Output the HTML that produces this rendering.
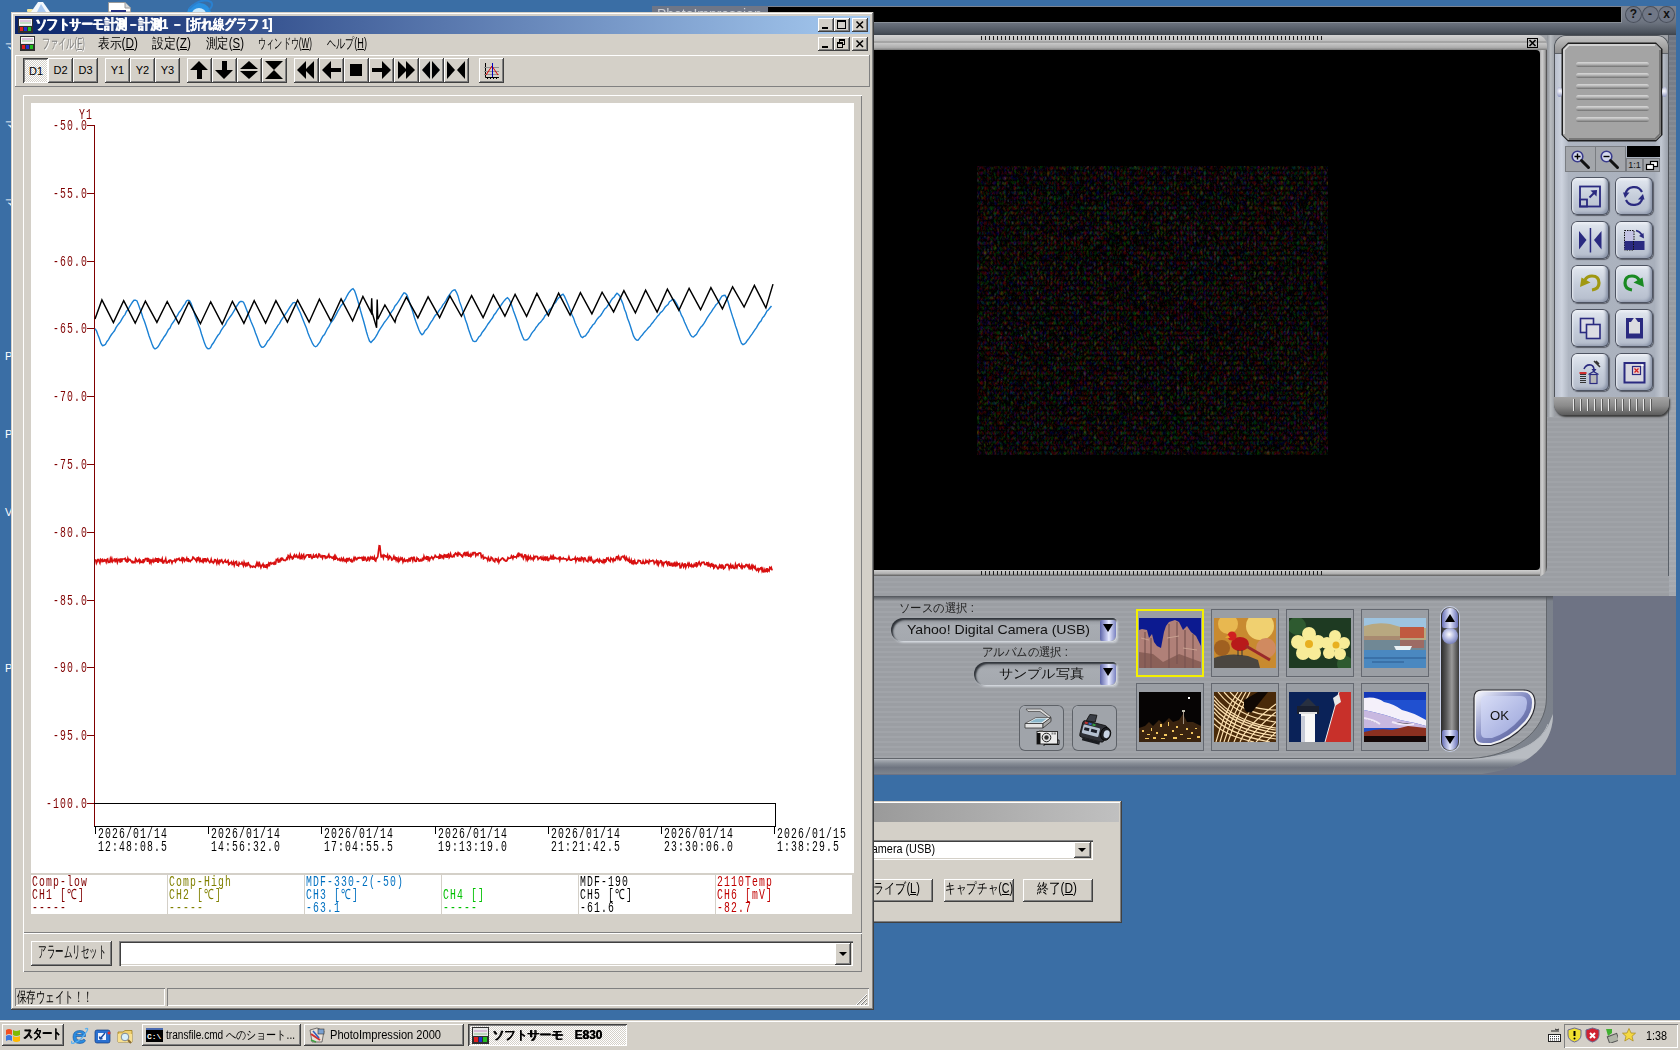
<!DOCTYPE html><html><head><meta charset="utf-8"><style>
*{margin:0;padding:0;box-sizing:border-box}
html,body{width:1680px;height:1050px;overflow:hidden;background:#3a6ea5;font-family:"Liberation Sans",sans-serif;font-size:12px;color:#000;position:relative}
.a{position:absolute}
.raised{background:#d4d0c8;box-shadow:inset -1px -1px #404040,inset 1px 1px #fff,inset -2px -2px #808080}
.btn{background:#d4d0c8;box-shadow:inset -1px -1px #404040,inset 1px 1px #fff,inset -2px -2px #808080}
.sunk{box-shadow:inset 1px 1px #808080,inset -1px -1px #fff,inset 2px 2px #404040,inset -2px -2px #d4d0c8}
.thinr{box-shadow:inset -1px -1px #808080,inset 1px 1px #fff}
.thins{box-shadow:inset 1px 1px #808080,inset -1px -1px #fff}
.mono{font-family:"Liberation Mono",monospace}
.t{white-space:nowrap;line-height:1}
u{text-decoration:underline;text-underline-offset:1px}
</style></head><body>
<div class="a t" style="left:5px;top:41px;color:#fff;font-size:11px">マ</div>
<div class="a t" style="left:5px;top:119px;color:#fff;font-size:11px">マ</div>
<div class="a t" style="left:5px;top:197px;color:#fff;font-size:11px">マ</div>
<div class="a t" style="left:5px;top:351px;color:#fff;font-size:11px">P</div>
<div class="a t" style="left:5px;top:429px;color:#fff;font-size:11px">P</div>
<div class="a t" style="left:5px;top:507px;color:#fff;font-size:11px">V</div>
<div class="a t" style="left:5px;top:663px;color:#fff;font-size:11px">P</div>
<svg class="a" style="left:24px;top:0" width="30" height="12"><rect x="3" y="9" width="6" height="3" rx="1" fill="#f4e8a0"/><polygon points="14,2 19,2 26,12 7,12" fill="#f4f8fc"/><polygon points="17,4 22,12 13,12" fill="#a8c8f0"/></svg>
<svg class="a" style="left:106px;top:0" width="28" height="12"><path d="M2.5 2.5 H19 L24.5 8 V12 H2.5Z" fill="#fff" stroke="#9a9a9a"/><path d="M19 2.5 V8 H24.5" fill="#d8d8d8" stroke="#9a9a9a"/><rect x="5" y="10" width="15" height="2" fill="#203080"/></svg>
<svg class="a" style="left:185px;top:0" width="30" height="12"><ellipse cx="14" cy="14" rx="12" ry="11" fill="#2a90e0"/><ellipse cx="14" cy="14" rx="7" ry="6" fill="#c8e8fc"/><path d="M4 9 Q16 -3 26 2 Q29 5 24 10" stroke="#2a80d0" stroke-width="2" fill="none"/></svg>
<div class="a" style="left:652px;top:6px;width:116px;height:8px;background:#6e7687;overflow:hidden"><div class="t" style="position:absolute;left:5px;top:0px;color:#c8ccd4;font-size:15px;transform:scaleX(.93);transform-origin:0 0">PhotoImpression</div></div>
<div class="a" style="left:768px;top:6px;width:908px;height:590px;background:repeating-linear-gradient(#a0a3a8 0 2px,#9b9ea3 2px 5px)"></div>
<div class="a" style="left:768px;top:6px;width:908px;height:29px;background:linear-gradient(#7e8490,#767c88 40%,#6a717d 60%,#4c535d 90%,#3e444c)"></div>
<div class="a" style="left:768px;top:7px;width:853px;height:15px;background:#000;box-shadow:1px 1px #8a9098"></div>
<div class="a t" style="left:1625.0px;top:6px;width:17px;height:17px;border-radius:50%;background:#707786;box-shadow:inset 0 0 0 1px #4a505c;color:#111;font-size:12px;font-weight:bold;text-align:center;line-height:16px">?</div>
<div class="a t" style="left:1641.5px;top:6px;width:17px;height:17px;border-radius:50%;background:#707786;box-shadow:inset 0 0 0 1px #4a505c;color:#111;font-size:12px;font-weight:bold;text-align:center;line-height:16px">-</div>
<div class="a t" style="left:1658.0px;top:6px;width:17px;height:17px;border-radius:50%;background:#707786;box-shadow:inset 0 0 0 1px #4a505c;color:#111;font-size:12px;font-weight:bold;text-align:center;line-height:16px">x</div>
<div class="a" style="left:1668px;top:35px;width:8px;height:561px;background:linear-gradient(90deg,#5a6068 0 1px,transparent 1px),repeating-linear-gradient(rgba(255,255,255,.06) 0 2px,transparent 2px 5px),linear-gradient(#6e7480,#8a9098 25%,#9ea2a8 60%,#a4a8ae)"></div>
<div class="a" style="left:768px;top:35px;width:779px;height:542px;border-radius:0 10px 10px 0;background:linear-gradient(#d4d4d4,#bcbcbc 40%,#8a8a8a 47%,#c8c8c8 54%,#ababab 85%,#7a7a7a) left top/100% 15px no-repeat,linear-gradient(90deg,#a8a8a8,#d0d0d0 30%,#a0a0a0 75%,#3a3a3a) right top/7px 100% no-repeat,linear-gradient(#d0d0d0,#b0b0b0 50%,#3a3a3a) left bottom/100% 7px no-repeat,#b0b0b0"></div>
<div class="a" style="left:981px;top:36px;width:343px;height:4px;background:repeating-linear-gradient(90deg,#1a1a1a 0 1px,transparent 1px 4px)"></div>
<div class="a" style="left:981px;top:571px;width:343px;height:4px;background:repeating-linear-gradient(90deg,#1a1a1a 0 1px,transparent 1px 4px)"></div>
<svg class="a" style="left:1527px;top:38px" width="11" height="10"><rect x="0.5" y="0.5" width="10" height="9" fill="none" stroke="#000"/><path d="M2.5 2 L8.5 8 M8.5 2 L2.5 8" stroke="#000" stroke-width="1.6"/></svg>
<div class="a" style="left:768px;top:50px;width:772px;height:520px;background:#000;border-radius:0 4px 4px 0"></div>
<svg class="a" style="left:977px;top:166px" width="351" height="289"><filter id="nz" x="0" y="0" width="100%" height="100%" color-interpolation-filters="sRGB"><feTurbulence type="turbulence" baseFrequency="0.3 0.2" numOctaves="3" seed="11"/><feColorMatrix values="0.46 0 0 0 -0.1  0 0.42 0 0 -0.1  0 0 0.42 0 -0.1  0 0 0 0 1"/></filter><rect width="351" height="289" fill="#000"/><rect width="351" height="289" filter="url(#nz)"/></svg>
<div class="a" style="left:1547px;top:35px;width:8px;height:382px;background:linear-gradient(90deg,#8e9298,#b8bcc0 45%,#9a9ea4)"></div>
<div class="a" style="left:1554px;top:35px;width:115px;height:380px;background:#9da2a8;border-radius:12px 12px 11px 11px;box-shadow:inset 0 0 0 1px #50545a"></div>
<div class="a" style="left:1555px;top:45px;width:113px;height:352px;background:linear-gradient(90deg,#b8bfcc,#cdd3de 6%,#aeb5c1 12%,#a9b0bc 88%,#c0c6d0 94%,#9aa0aa)"></div>
<div class="a" style="left:1555px;top:36px;width:113px;height:18px;border-radius:11px 11px 0 0;background:linear-gradient(#c4c4c4,#a8a8a8 50%,#8c8c8c);box-shadow:inset 0 -1px #60646a"></div>
<svg class="a" style="left:1561px;top:42px" width="103" height="102"><polygon points="7,0.5 95,0.5 101.5,7 101.5,93 95,99.5 7,99.5 0.5,93 0.5,7" fill="#1e1e1e"/><polygon points="7,2 95,2 100,7 100,93 95,98 7,98 2,93 2,7" fill="#a4a4a4"/><path d="M3 92 V8 L8 3 H94" fill="none" stroke="#e0e0e0" stroke-width="1.5"/><path d="M99 8 V92 L94 97 H8" fill="none" stroke="#6a6a6a" stroke-width="1.5"/></svg>
<div class="a" style="left:1557px;top:87px;width:5px;height:10px;border-radius:50%;background:radial-gradient(circle at 60% 40%,#fff,#8088b8)"></div>
<div class="a" style="left:1662px;top:87px;width:5px;height:10px;border-radius:50%;background:radial-gradient(circle at 40% 40%,#fff,#8088b8)"></div>
<div class="a" style="left:1576px;top:62px;width:73px;height:5px;border-radius:3px;background:linear-gradient(#d8d8d8,#bcbcbc 40%,#707070)"></div>
<div class="a" style="left:1576px;top:73px;width:73px;height:5px;border-radius:3px;background:linear-gradient(#d8d8d8,#bcbcbc 40%,#707070)"></div>
<div class="a" style="left:1576px;top:84px;width:73px;height:5px;border-radius:3px;background:linear-gradient(#d8d8d8,#bcbcbc 40%,#707070)"></div>
<div class="a" style="left:1576px;top:95px;width:73px;height:5px;border-radius:3px;background:linear-gradient(#d8d8d8,#bcbcbc 40%,#707070)"></div>
<div class="a" style="left:1576px;top:106px;width:73px;height:5px;border-radius:3px;background:linear-gradient(#d8d8d8,#bcbcbc 40%,#707070)"></div>
<div class="a" style="left:1576px;top:117px;width:73px;height:5px;border-radius:3px;background:linear-gradient(#d8d8d8,#bcbcbc 40%,#707070)"></div>
<div class="a" style="left:1565px;top:146px;width:61px;height:26px;background:#a3a6ab;box-shadow:inset 0 0 0 1px #7a7d82"></div>
<div class="a" style="left:1595px;top:146px;width:1px;height:26px;background:#7a7d82"></div>
<svg class="a" style="left:1571px;top:150px" width="22" height="22"><circle cx="6.5" cy="6.5" r="5.3" fill="#d4d8ec" stroke="#3a3c8c" stroke-width="1.6"/><path d="M3.5 6.5h6M6.5 3.5v6" stroke="#000" stroke-width="1.4"/><path d="M10.5 10.5 L17.5 17.5" stroke="#111" stroke-width="3" stroke-linecap="round"/></svg>
<svg class="a" style="left:1600px;top:150px" width="22" height="22"><circle cx="6.5" cy="6.5" r="5.3" fill="#d4d8ec" stroke="#3a3c8c" stroke-width="1.6"/><path d="M3.5 6.5h6" stroke="#000" stroke-width="1.4"/><path d="M10.5 10.5 L17.5 17.5" stroke="#111" stroke-width="3" stroke-linecap="round"/></svg>
<div class="a" style="left:1627px;top:146px;width:33px;height:11px;background:#000"></div>
<div class="a t" style="left:1626px;top:158px;width:17px;height:14px;background:#a3a6ab;box-shadow:inset 0 0 0 1px #7a7d82;font-size:9px;text-align:center;line-height:14px;color:#111">1:1</div>
<div class="a" style="left:1643px;top:158px;width:17px;height:14px;background:#a3a6ab;box-shadow:inset 0 0 0 1px #7a7d82"></div>
<svg class="a" style="left:1645px;top:160px" width="14" height="11"><rect x="5.5" y="1.5" width="7" height="5" fill="#fff" stroke="#000" stroke-width="1.2"/><rect x="1.5" y="4.5" width="7" height="5" fill="#fff" stroke="#000" stroke-width="1.2"/></svg>
<div class="a" style="left:1571px;top:177px;width:38px;height:38px;border-radius:6px;background:linear-gradient(#f4f6fa,#dde3ec 12%,#c6cedb 50%,#b4bccb);box-shadow:inset 0 0 0 1px #4e5462,inset 2px 0 2px #e8ecf2,inset -3px -2px 3px #8a94a8,1px 1px 1px #5a5e68"></div>
<svg class="a" style="left:1571px;top:177px" width="38" height="38" viewBox="0 0 38 38"><rect x="9" y="9.5" width="20" height="20" fill="none" stroke="#2a2a80" stroke-width="1.8"/><rect x="9" y="22.5" width="7" height="7" fill="none" stroke="#2a2a80" stroke-width="1.8"/><path d="M18.5 20.5 L23.5 15.5" stroke="#2a2a80" stroke-width="2"/><polygon points="26,13 25.5,19.5 19.5,13.5" fill="#2a2a80"/></svg>
<div class="a" style="left:1615px;top:177px;width:38px;height:38px;border-radius:6px;background:linear-gradient(#f4f6fa,#dde3ec 12%,#c6cedb 50%,#b4bccb);box-shadow:inset 0 0 0 1px #4e5462,inset 2px 0 2px #e8ecf2,inset -3px -2px 3px #8a94a8,1px 1px 1px #5a5e68"></div>
<svg class="a" style="left:1615px;top:177px" width="38" height="38" viewBox="0 0 38 38"><path d="M10.5 17 A8.8 8.8 0 0 1 27 15" fill="none" stroke="#2a2a80" stroke-width="2.2"/><polygon points="8,15.5 14.5,15.5 10,21" fill="#2a2a80"/><path d="M27.5 21 A8.8 8.8 0 0 1 11 23" fill="none" stroke="#2a2a80" stroke-width="2.2"/><polygon points="29.5,22.5 23,22.5 28,17" fill="#2a2a80"/></svg>
<div class="a" style="left:1571px;top:221px;width:38px;height:38px;border-radius:6px;background:linear-gradient(#f4f6fa,#dde3ec 12%,#c6cedb 50%,#b4bccb);box-shadow:inset 0 0 0 1px #4e5462,inset 2px 0 2px #e8ecf2,inset -3px -2px 3px #8a94a8,1px 1px 1px #5a5e68"></div>
<svg class="a" style="left:1571px;top:221px" width="38" height="38" viewBox="0 0 38 38"><polygon points="8,10 15.5,19 8,28.5" fill="#2a2a80"/><polygon points="30.5,10 23,19 30.5,28.5" fill="#2a2a80"/><rect x="18.7" y="7" width="1.5" height="24.5" fill="#2a2a80"/></svg>
<div class="a" style="left:1615px;top:221px;width:38px;height:38px;border-radius:6px;background:linear-gradient(#f4f6fa,#dde3ec 12%,#c6cedb 50%,#b4bccb);box-shadow:inset 0 0 0 1px #4e5462,inset 2px 0 2px #e8ecf2,inset -3px -2px 3px #8a94a8,1px 1px 1px #5a5e68"></div>
<svg class="a" style="left:1615px;top:221px" width="38" height="38" viewBox="0 0 38 38"><rect x="9.5" y="9.5" width="9.5" height="19.5" fill="#c4c4e4" stroke="#111" stroke-width="1" stroke-dasharray="1.5 1"/><rect x="9.5" y="20" width="20" height="9" fill="#2a2a80"/><path d="M18.5 20 V29" stroke="#111" stroke-dasharray="1.5 1"/><path d="M21 9.5 Q25 10.5 27 14" fill="none" stroke="#2a2a80" stroke-width="1.8"/><polygon points="29,17.5 24,15 28.5,12" fill="#2a2a80"/></svg>
<div class="a" style="left:1571px;top:265px;width:38px;height:38px;border-radius:6px;background:linear-gradient(#f4f6fa,#dde3ec 12%,#c6cedb 50%,#b4bccb);box-shadow:inset 0 0 0 1px #4e5462,inset 2px 0 2px #e8ecf2,inset -3px -2px 3px #8a94a8,1px 1px 1px #5a5e68"></div>
<svg class="a" style="left:1571px;top:265px" width="38" height="38" viewBox="0 0 38 38"><path d="M21 25 Q28 24 28 18 Q28 11 21 11 Q16 11 14 15" fill="none" stroke="#a09812" stroke-width="3.2"/><polygon points="9,22 10.5,12.5 19.5,17.5" fill="#a09812"/></svg>
<div class="a" style="left:1615px;top:265px;width:38px;height:38px;border-radius:6px;background:linear-gradient(#f4f6fa,#dde3ec 12%,#c6cedb 50%,#b4bccb);box-shadow:inset 0 0 0 1px #4e5462,inset 2px 0 2px #e8ecf2,inset -3px -2px 3px #8a94a8,1px 1px 1px #5a5e68"></div>
<svg class="a" style="left:1615px;top:265px" width="38" height="38" viewBox="0 0 38 38"><path d="M17 25 Q10 24 10 18 Q10 11 17 11 Q22 11 24 15" fill="none" stroke="#1a8a22" stroke-width="3.2"/><polygon points="29,22 27.5,12.5 18.5,17.5" fill="#1a8a22"/></svg>
<div class="a" style="left:1571px;top:309px;width:38px;height:38px;border-radius:6px;background:linear-gradient(#f4f6fa,#dde3ec 12%,#c6cedb 50%,#b4bccb);box-shadow:inset 0 0 0 1px #4e5462,inset 2px 0 2px #e8ecf2,inset -3px -2px 3px #8a94a8,1px 1px 1px #5a5e68"></div>
<svg class="a" style="left:1571px;top:309px" width="38" height="38" viewBox="0 0 38 38"><rect x="9.5" y="9.5" width="13" height="14" fill="#dcdce4" stroke="#2a2a80" stroke-width="1.6"/><rect x="15.5" y="15.5" width="13.5" height="14" fill="#dcdce4" stroke="#2a2a80" stroke-width="1.6"/></svg>
<div class="a" style="left:1615px;top:309px;width:38px;height:38px;border-radius:6px;background:linear-gradient(#f4f6fa,#dde3ec 12%,#c6cedb 50%,#b4bccb);box-shadow:inset 0 0 0 1px #4e5462,inset 2px 0 2px #e8ecf2,inset -3px -2px 3px #8a94a8,1px 1px 1px #5a5e68"></div>
<svg class="a" style="left:1615px;top:309px" width="38" height="38" viewBox="0 0 38 38"><rect x="11" y="9" width="17" height="20.5" fill="#2a2a80"/><rect x="14" y="13" width="11" height="11.5" fill="#dcdce0"/><polygon points="16,13 19.5,8 23,13" fill="#dcdce0"/></svg>
<div class="a" style="left:1571px;top:353px;width:38px;height:38px;border-radius:6px;background:linear-gradient(#f4f6fa,#dde3ec 12%,#c6cedb 50%,#b4bccb);box-shadow:inset 0 0 0 1px #4e5462,inset 2px 0 2px #e8ecf2,inset -3px -2px 3px #8a94a8,1px 1px 1px #5a5e68"></div>
<svg class="a" style="left:1571px;top:353px" width="38" height="38" viewBox="0 0 38 38"><g stroke="#333" stroke-width="1"><path d="M9 21.5 H15 M9 23.5 H15 M9 25.5 H15 M9 27.5 H15 M9 29.5 H15"/></g><rect x="8.5" y="19" width="7" height="2" fill="#d03030"/><path d="M13 16 Q15 11 20 12 Q23 13 23 17" fill="none" stroke="#2a2a80" stroke-width="1.6"/><polygon points="20.5,16 25.5,16 23,19.5" fill="#2a2a80"/><path d="M17.5 21.5 L22.5 18.5 L27.5 21.5" fill="none" stroke="#2a2a80" stroke-width="1.2"/><rect x="19" y="21.5" width="7" height="9" fill="#b8b8b8" stroke="#2a2a80" stroke-width="1.2"/><path d="M23 8 L29 14 M25 8 L28 11" stroke="#333" stroke-width="1.5"/></svg>
<div class="a" style="left:1615px;top:353px;width:38px;height:38px;border-radius:6px;background:linear-gradient(#f4f6fa,#dde3ec 12%,#c6cedb 50%,#b4bccb);box-shadow:inset 0 0 0 1px #4e5462,inset 2px 0 2px #e8ecf2,inset -3px -2px 3px #8a94a8,1px 1px 1px #5a5e68"></div>
<svg class="a" style="left:1615px;top:353px" width="38" height="38" viewBox="0 0 38 38"><rect x="9.5" y="10" width="20" height="19.5" fill="#d8d8e0" stroke="#2a2a80" stroke-width="2"/><rect x="26" y="11.5" width="2.5" height="1.5" fill="#fff"/><rect x="17.5" y="13.5" width="8" height="8" fill="#f0d0d0" stroke="#2a2a80" stroke-width="1.2"/><path d="M19.5 15.5 L23.5 19.5 M23.5 15.5 L19.5 19.5" stroke="#d02020" stroke-width="1.3"/></svg>
<div class="a" style="left:1554px;top:397px;width:115px;height:18px;border-radius:0 0 11px 11px;background:linear-gradient(#a4a4a4,#8a8a8a 50%,#5c5c5c);box-shadow:1px 2px 2px #3a3a3a"></div>
<div class="a" style="left:1573px;top:399px;width:82px;height:12px;background:repeating-linear-gradient(90deg,#e8e8e8 0 1px,#5a5a5a 1px 2px,transparent 2px 7px)"></div>
<div class="a" style="left:768px;top:576px;width:901px;height:20px;background:repeating-linear-gradient(#a0a3a8 0 2px,#9b9ea3 2px 5px)"></div>
<svg class="a" style="left:768px;top:596px" width="908" height="179"><defs><pattern id="stp" width="8" height="5" patternUnits="userSpaceOnUse"><rect width="8" height="5" fill="#9b9ea3"/><rect width="8" height="2" fill="#a1a4a9"/></pattern><linearGradient id="bandv" x1="0" y1="0" x2="1" y2="0"><stop offset="0" stop-color="#c4c8ce"/><stop offset=".5" stop-color="#9aa0a8"/><stop offset="1" stop-color="#7a808a"/></linearGradient><linearGradient id="topsh" x1="0" y1="0" x2="0" y2="1"><stop offset="0" stop-color="#50545a"/><stop offset="1" stop-color="#50545a" stop-opacity="0"/></linearGradient></defs><rect width="908" height="179" fill="#6e7384"/><path d="M0 0 H785 V118 C785 150 760 172 714 177 H0 Z" fill="#8c9098"/><path d="M0 162 H703 C745 160 778 135 778 102 V0 H785 V118 C785 150 760 172 714 177 H0 Z" fill="url(#bandv)" opacity=".9"/><linearGradient id="bandh" x1="0" y1="162" x2="0" y2="178" gradientUnits="userSpaceOnUse"><stop offset="0" stop-color="#b8bcc2"/><stop offset=".35" stop-color="#868c95"/><stop offset=".6" stop-color="#6e7480"/><stop offset="1" stop-color="#7e848e"/></linearGradient><path d="M0 162 H703 C740 161 770 150 780 130 L785 118 C785 150 760 172 714 178 H0Z" fill="url(#bandh)"/><path d="M0 0 H778 V102 C778 135 745 160 703 162 H0 Z" fill="url(#stp)"/><path d="M0 162.5 H703 C745 160.5 778.5 135 778.5 102 V0" fill="none" stroke="#62666c" stroke-width="1"/><path d="M0 163.5 H703 C742 162 772 150 780 128" fill="none" stroke="#b4b8be" stroke-width="1"/><rect width="785" height="5" fill="url(#topsh)"/></svg>
<div id="f0dd26bed93" class="a t fit " style="left:899px;top:602px;font-size:12px;color:#1e1e1e;;--w:75px;transform:scaleX(0.9494);transform-origin:left top">ソースの選択 :</div>
<div id="f5ebed37c10" class="a t fit " style="left:982px;top:646px;font-size:12px;color:#1e1e1e;;--w:86px;transform:scaleX(0.9451);transform-origin:left top">アルバムの選択 :</div>
<div class="a" style="left:891px;top:618px;width:226px;height:24px;border-radius:13px 5px 5px 13px;background:linear-gradient(#8e9298,#a8acb2 30%,#a4a8ae);box-shadow:inset 2px 2px 2px #2e3238,inset -1px -1px #d0d4da,1px 1px 2px #c8ccd2"></div>
<div class="a" style="left:1100px;top:620px;width:16px;height:21px;border-radius:2px 3px 6px 2px;background:linear-gradient(90deg,#5c64a8,#c8ccf0 45%,#e8ecff 55%,#7880c0)"></div>
<div class="a" style="left:1103px;top:624px;width:0;height:0;border-left:5px solid transparent;border-right:5px solid transparent;border-top:8px solid #000"></div>
<div id="f22f98aca1d" class="a t fit " style="left:907px;top:623px;font-size:13px;color:#111;;--w:183px;transform:scaleX(1.0828);transform-origin:left top">Yahoo! Digital Camera (USB)</div>
<div class="a" style="left:974px;top:662px;width:143px;height:24px;border-radius:13px 5px 5px 13px;background:linear-gradient(#8e9298,#a8acb2 30%,#a4a8ae);box-shadow:inset 2px 2px 2px #2e3238,inset -1px -1px #d0d4da,1px 1px 2px #c8ccd2"></div>
<div class="a" style="left:1100px;top:664px;width:16px;height:21px;border-radius:2px 3px 6px 2px;background:linear-gradient(90deg,#5c64a8,#c8ccf0 45%,#e8ecff 55%,#7880c0)"></div>
<div class="a" style="left:1103px;top:668px;width:0;height:0;border-left:5px solid transparent;border-right:5px solid transparent;border-top:8px solid #000"></div>
<div id="fd26a736fdb" class="a t fit " style="left:999px;top:667px;font-size:13px;color:#111;;--w:85px;transform:scaleX(1.0897);transform-origin:left top">サンプル写真</div>
<div class="a" style="left:1019px;top:705px;width:45px;height:46px;border-radius:6px;box-shadow:inset 0 0 0 1px #5e6268,inset 1px 1px #c0c4ca;background:#a0a4aa"></div>
<div class="a" style="left:1072px;top:705px;width:45px;height:46px;border-radius:6px;box-shadow:inset 0 0 0 1px #5e6268,inset 1px 1px #c0c4ca;background:#a0a4aa"></div>
<svg class="a" style="left:1019px;top:705px" width="45" height="46"><polygon points="7,4 22,4 32,12 30,13 21,6.5 9,6.5" fill="#d8d8d8" stroke="#444" stroke-width=".7"/><polygon points="6,18.5 17,12.5 32,12.5 24,18.5" fill="#f0f0f0" stroke="#444" stroke-width=".7"/><polygon points="10,17.5 17.5,13.5 28,13.5 22.5,17.5" fill="#8ab8cc"/><polygon points="6,18.5 24,18.5 24,23 6,23" fill="#e4e4e4" stroke="#333" stroke-width=".8"/><polygon points="24,18.5 32,12.5 32,16.5 24,23" fill="#a8a8a8" stroke="#333" stroke-width=".8"/><rect x="18" y="26.5" width="20.5" height="12.5" fill="#ececec" stroke="#222" stroke-width=".9"/><rect x="18" y="28" width="3.5" height="11" fill="#111"/><circle cx="27.5" cy="32.5" r="4.3" fill="#e8e8e8" stroke="#222" stroke-width="1"/><circle cx="27.5" cy="32.5" r="2.2" fill="#333"/><rect x="32.5" y="27.5" width="2" height="2" fill="#888"/><rect x="35" y="27.5" width="2" height="2" fill="#888"/><rect x="20" y="25" width="4" height="1.5" fill="#777"/><path d="M38.5 35 H40 V39.5 H25 V41" fill="none" stroke="#111" stroke-width=".9"/></svg>
<svg class="a" style="left:1072px;top:705px" width="45" height="46"><g transform="rotate(14 22 26)"><rect x="9" y="18" width="25" height="17" rx="2.5" fill="#2e3036" stroke="#111" stroke-width=".8"/><rect x="10.5" y="22" width="17" height="9" rx="1" fill="#b4c0d0"/><rect x="12" y="24.5" width="5" height="3" fill="#1a1e28"/><rect x="19" y="24.5" width="6" height="3" fill="#1a1e28"/><rect x="11" y="19" width="3" height="2" fill="#c03030"/><rect x="15" y="19" width="3" height="2" fill="#3060c0"/><rect x="19" y="19" width="3" height="2" fill="#30a040"/><ellipse cx="34" cy="26" rx="5" ry="6.5" fill="#1e2024" stroke="#000" stroke-width=".8"/><ellipse cx="35" cy="26" rx="3" ry="4" fill="#c8d4e4"/><path d="M12 18 L14 11 L21 10 L21 17Z" fill="#3a3e46" stroke="#111" stroke-width=".8"/><rect x="12.5" y="35" width="18" height="3" fill="#1a1c20"/></g></svg>
<div class="a" style="left:1136px;top:609px;width:68px;height:68px;box-shadow:inset 0 0 0 2px #f4f000;background:#9a9ea4"></div>
<svg class="a" style="left:1139px;top:618px" width="62" height="50" viewBox="0 0 62 50"><rect width="62" height="50" fill="#0c1a90"/><path d="M0 50 V12 L3 11 L8 12 L10 20 L13 16 L15 24 L18 28 L22 30 L25 14 L27 8 L30 4 L36 2 L40 4 L44 12 L48 8 L52 14 L57 18 L62 28 V50 Z" fill="#b08078"/><path d="M0 50 V34 L14 36 L24 44 L40 36 L62 44 V50Z" fill="#8a6058"/><path d="M6 14 V50 M12 20 V50 M30 6 V50 M38 4 V46 M46 12 V50 M54 16 V50" stroke="#7a5450" stroke-width="1.2"/><path d="M2 20 L10 22 M28 20 L40 18 M44 30 L58 32" stroke="#c8a090" stroke-width="1"/></svg>
<div class="a" style="left:1211px;top:609px;width:68px;height:68px;box-shadow:inset 0 0 0 1px #646870,inset 1px 1px #b4b8be;background:#9a9ea4"></div>
<svg class="a" style="left:1214px;top:618px" width="62" height="50" viewBox="0 0 62 50"><rect width="62" height="50" fill="#c88a30"/><circle cx="46" cy="8" r="14" fill="#f0d070"/><circle cx="14" cy="6" r="10" fill="#e8b850"/><circle cx="52" cy="30" r="10" fill="#d08a60"/><circle cx="8" cy="30" r="8" fill="#a06020"/><path d="M0 40 Q16 34 34 38 L44 42 L46 50 H0Z" fill="#4a4640"/><ellipse cx="26" cy="26" rx="9" ry="7" fill="#b81a1a"/><circle cx="18" cy="18" r="4.5" fill="#d02020"/><polygon points="14,17 11,20 16,20" fill="#e8a030"/><path d="M32 28 L56 42" stroke="#9a2a2a" stroke-width="3"/><path d="M24 32 L24 38 M28 32 L28 38" stroke="#333" stroke-width="1"/></svg>
<div class="a" style="left:1286px;top:609px;width:68px;height:68px;box-shadow:inset 0 0 0 1px #646870,inset 1px 1px #b4b8be;background:#9a9ea4"></div>
<svg class="a" style="left:1289px;top:618px" width="62" height="50" viewBox="0 0 62 50"><rect width="62" height="50" fill="#1e3a22"/><circle cx="8" cy="8" r="9" fill="#2e5a30"/><circle cx="56" cy="46" r="8" fill="#2e5a30"/><g fill="#f8ec98"><circle cx="20" cy="16" r="7"/><circle cx="29" cy="24" r="7"/><circle cx="25" cy="35" r="7"/><circle cx="14" cy="35" r="7"/><circle cx="9" cy="24" r="7"/><circle cx="19" cy="26" r="7"/></g><circle cx="20" cy="26" r="4" fill="#e8b020"/><g fill="#f8ec98"><circle cx="46" cy="18" r="6"/><circle cx="55" cy="25" r="6"/><circle cx="51" cy="36" r="6"/><circle cx="40" cy="35" r="6"/><circle cx="38" cy="25" r="6"/><circle cx="47" cy="27" r="6"/></g><circle cx="47" cy="27" r="3.5" fill="#e8b020"/></svg>
<div class="a" style="left:1361px;top:609px;width:68px;height:68px;box-shadow:inset 0 0 0 1px #646870,inset 1px 1px #b4b8be;background:#9a9ea4"></div>
<svg class="a" style="left:1364px;top:618px" width="62" height="50" viewBox="0 0 62 50"><rect width="62" height="50" fill="#9ec4e0"/><path d="M0 8 Q12 4 26 6 L40 10 L62 10 V24 H0Z" fill="#b8a880"/><rect x="36" y="9" width="24" height="11" fill="#c05a40"/><rect x="0" y="18" width="36" height="4" fill="#a88a70"/><rect x="0" y="22" width="62" height="28" fill="#4a88c0"/><path d="M0 22 H62 V32 H0Z" fill="#8a8878" opacity=".6"/><rect x="36" y="22" width="24" height="8" fill="#b06050" opacity=".7"/><path d="M30 28 H48 L46 32 H32Z" fill="#e8f0f4"/><path d="M0 40 H62 M8 44 H40" stroke="#2a5a90" stroke-width="1.2"/></svg>
<div class="a" style="left:1136px;top:683px;width:68px;height:68px;box-shadow:inset 0 0 0 1px #646870,inset 1px 1px #b4b8be;background:#9a9ea4"></div>
<svg class="a" style="left:1139px;top:692px" width="62" height="50" viewBox="0 0 62 50"><rect width="62" height="50" fill="#060404"/><rect x="49" y="5" width="2" height="2" fill="#fff"/><path d="M0 50 V36 L6 34 L10 30 L14 34 L20 28 L24 32 L30 26 L34 30 L40 28 L44 22 L48 30 L54 30 L62 34 V50Z" fill="#3a2410"/><rect x="43" y="18" width="3" height="2" fill="#c0c0b0"/><rect x="44" y="20" width="1" height="12" fill="#a09080"/><g fill="#f4c860"><rect x="3" y="38" width="2" height="2"/><rect x="8" y="42" width="3" height="1"/><rect x="12" y="36" width="1" height="3"/><rect x="17" y="40" width="2" height="2"/><rect x="21" y="32" width="2" height="3"/><rect x="25" y="42" width="3" height="2"/><rect x="29" y="30" width="1" height="4"/><rect x="33" y="38" width="2" height="2"/><rect x="37" y="34" width="2" height="2"/><rect x="41" y="42" width="3" height="1"/><rect x="47" y="36" width="2" height="2"/><rect x="52" y="40" width="2" height="2"/><rect x="56" y="36" width="2" height="1"/><rect x="6" y="46" width="4" height="1"/><rect x="14" y="45" width="3" height="2"/><rect x="22" y="46" width="4" height="1"/><rect x="34" y="45" width="4" height="2"/><rect x="48" y="46" width="4" height="1"/><rect x="58" y="44" width="3" height="2"/></g></svg>
<div class="a" style="left:1211px;top:683px;width:68px;height:68px;box-shadow:inset 0 0 0 1px #646870,inset 1px 1px #b4b8be;background:#9a9ea4"></div>
<svg class="a" style="left:1214px;top:692px" width="62" height="50" viewBox="0 0 62 50"><rect width="62" height="50" fill="#4a2a0a"/><g stroke="#fce0b0" stroke-width="1.2" fill="none"><path d="M0 4 Q20 30 62 36 M0 8 Q20 32 62 38 M0 12 Q20 34 62 41 M0 16 Q18 38 62 44 M0 20 Q16 40 62 47 M0 26 Q14 42 56 50 M0 32 Q12 44 40 50 M4 0 Q24 26 62 30 M10 0 Q28 22 62 24 M16 0 Q32 18 62 18"/><path d="M2 50 Q10 20 24 0 M6 50 Q14 20 28 0 M10 50 Q18 24 32 0 M14 50 Q22 26 36 0 M20 50 Q28 30 44 6 M26 50 Q32 34 62 12 M34 50 Q40 38 62 20 M42 50 L62 30 M52 50 L62 40"/></g><path d="M30 8 L44 0 L54 0 L38 20 Q32 22 30 16Z" fill="#100804"/></svg>
<div class="a" style="left:1286px;top:683px;width:68px;height:68px;box-shadow:inset 0 0 0 1px #646870,inset 1px 1px #b4b8be;background:#9a9ea4"></div>
<svg class="a" style="left:1289px;top:692px" width="62" height="50" viewBox="0 0 62 50"><rect width="62" height="50" fill="#0a2258"/><polygon points="36,50 50,0 62,0 62,50" fill="#c8302a"/><path d="M50 0 L36 50" stroke="#f0f0f0" stroke-width="1"/><polygon points="44,6 50,2 52,10 46,14" fill="#e8e8e8"/><rect x="12" y="22" width="14" height="28" fill="#f8f8f8"/><rect x="8" y="14" width="22" height="8" fill="#1a2030"/><polygon points="11,14 19,6 27,14" fill="#283040"/><rect x="12" y="24" width="4" height="26" fill="#c8ccd8"/><rect x="10" y="20" width="18" height="2" fill="#e0e0e0"/></svg>
<div class="a" style="left:1361px;top:683px;width:68px;height:68px;box-shadow:inset 0 0 0 1px #646870,inset 1px 1px #b4b8be;background:#9a9ea4"></div>
<svg class="a" style="left:1364px;top:692px" width="62" height="50" viewBox="0 0 62 50"><rect width="62" height="50" fill="#2050d0"/><rect width="62" height="8" fill="#1438b8"/><path d="M0 6 Q12 4 20 10 Q30 12 38 18 Q48 20 62 28 V34 Q48 30 36 28 Q20 22 0 18Z" fill="#f4f0fa"/><path d="M0 18 Q20 22 36 28 Q48 30 62 34 V36 H0Z" fill="#c8b8e0"/><path d="M0 26 Q10 28 16 32 M28 30 Q40 34 50 32" stroke="#f0e8f8" stroke-width="2"/><path d="M0 40 Q14 36 28 38 L44 34 L62 36 V50 H0Z" fill="#8a3020"/><rect y="44" width="62" height="6" fill="#140808"/></svg>
<div class="a" style="left:1441px;top:607px;width:18px;height:144px;border-radius:9px;background:linear-gradient(90deg,#2a2a2a,#5a5a5a 30%,#9a9a9a 60%,#3a3a3a);box-shadow:0 0 0 1px #c8d0e8"></div>
<div class="a" style="left:1442px;top:608px;width:16px;height:20px;border-radius:8px 8px 2px 2px;background:linear-gradient(90deg,#6870b8,#e4e8fc 50%,#6870b8)"></div>
<div class="a" style="left:1445px;top:614px;border-left:5px solid transparent;border-right:5px solid transparent;border-bottom:8px solid #000"></div>
<div class="a" style="left:1442px;top:628px;width:16px;height:16px;border-radius:50%;background:radial-gradient(circle at 45% 40%,#fff,#a0a8d8 50%,#505898)"></div>
<div class="a" style="left:1442px;top:730px;width:16px;height:20px;border-radius:2px 2px 8px 8px;background:linear-gradient(90deg,#6870b8,#e4e8fc 50%,#6870b8)"></div>
<div class="a" style="left:1445px;top:736px;border-left:5px solid transparent;border-right:5px solid transparent;border-top:8px solid #000"></div>
<svg class="a" style="left:1471px;top:687px" width="66" height="62"><defs><linearGradient id="okg" x1="0" y1="0" x2="1" y2="1"><stop offset="0" stop-color="#d8ddf6"/><stop offset=".55" stop-color="#b4bce6"/><stop offset="1" stop-color="#9aa4d8"/></linearGradient><linearGradient id="okr" x1="0" y1="0" x2="1" y2="1"><stop offset="0" stop-color="#f4f6ff"/><stop offset=".5" stop-color="#8088c0"/><stop offset="1" stop-color="#505890"/></linearGradient></defs><path d="M11 3 H52 Q64 3 64 16 Q64 26 56 36 Q40 54 20 58.5 H11 Q3 58.5 3 50 V11 Q3 3 11 3Z" fill="#f0f0f4" stroke="#2a2a30" stroke-width="1.2"/><path d="M12 5 H51 Q61 5 61 16 Q61 25 54 34 Q39 51 20 56 H12 Q5 56 5 49 V12 Q5 5 12 5Z" fill="url(#okr)"/><path d="M15 9 H49 Q56 9 56 16 Q56 24 50 31 Q37 46 21 51 H15 Q10 51 10 46 V14 Q10 9 15 9Z" fill="url(#okg)"/></svg>
<div id="fa374e9d566" class="a t fit " style="left:1490px;top:709px;font-size:13px;color:#111;;--w:19px;transform:scaleX(1.0000);transform-origin:left top">OK</div>
<div class="a" style="left:700px;top:801px;width:422px;height:122px;background:#d4d0c8;box-shadow:inset -1px -1px #404040,inset 1px 1px #d4d0c8,inset -2px -2px #808080,inset 2px 2px #fff"></div>
<div class="a" style="left:703px;top:803px;width:416px;height:19px;background:linear-gradient(90deg,#808080,#c0c0c0)"></div>
<div class="a" style="left:760px;top:840px;width:333px;height:20px;background:#fff;box-shadow:inset 1px 1px #808080,inset 2px 2px #404040,inset -1px -1px #fff,inset -2px -2px #d4d0c8"></div>
<div id="f3a4a72490f" class="a t fit " style="left:864px;top:843px;font-size:12px;color:#000;;--w:71px;transform:scaleX(0.8987);transform-origin:left top">Camera (USB)</div>
<div class="a btn" style="left:1074px;top:842px;width:17px;height:16px"></div>
<div class="a" style="left:1078px;top:848px;border-left:4px solid transparent;border-right:4px solid transparent;border-top:4px solid #000"></div>
<div class="a btn" style="left:846px;top:879px;width:87px;height:23px"></div>
<div class="a btn" style="left:944px;top:879px;width:70px;height:23px"></div>
<div class="a btn" style="left:1023px;top:879px;width:70px;height:23px"></div>
<div id="f5e0426854c" class="a t fit " style="left:873px;top:881px;font-size:14px;color:#000;;--w:47px;transform:scaleX(0.7966);transform-origin:left top">ライブ(<u>L</u>)</div>
<div id="f82b49382d0" class="a t fit " style="left:945px;top:881px;font-size:14px;color:#000;;--w:68px;transform:scaleX(0.7640);transform-origin:left top">キャプチャ(<u>C</u>)</div>
<div id="f8d011dc0c1" class="a t fit " style="left:1037px;top:881px;font-size:14px;color:#000;;--w:40px;transform:scaleX(0.8511);transform-origin:left top">終了(<u>D</u>)</div>
<div class="a" style="left:11px;top:12px;width:863px;height:998px;background:#d4d0c8;box-shadow:inset -1px -1px #404040,inset 1px 1px #d4d0c8,inset -2px -2px #808080,inset 2px 2px #fff"></div>
<div class="a" style="left:15px;top:16px;width:855px;height:18px;background:linear-gradient(90deg,#0a246a,#a6caf0)"></div>
<svg class="a" style="left:18px;top:18px" width="15" height="15"><rect x="0.5" y="0.5" width="14" height="14" fill="#e8e8e8" stroke="#303030"/><rect x="1" y="1" width="13" height="6" fill="#f8f8f8"/><path d="M2 3 H13" stroke="#c090c0"/><path d="M2 5 H13" stroke="#90c090"/><rect x="1" y="8" width="13" height="6" fill="#303030"/><rect x="2" y="9" width="3" height="4" fill="#e02020"/><rect x="6" y="9" width="3" height="4" fill="#2030d0"/><rect x="10" y="9" width="3" height="4" fill="#20c020"/></svg>
<div id="f6a7357ead3" class="a t fit " style="left:35px;top:17px;font-size:14px;color:#fff;font-weight:bold;text-shadow:0.7px 0 #fff;;--w:237px;transform:scaleX(0.8201);transform-origin:left top">ソフトサーモ計測－計測1 － [折れ線グラフ 1]</div>
<div class="a btn" style="left:818px;top:18px;width:16px;height:14px"></div>
<div class="a" style="left:822px;top:27px;width:6px;height:2px;background:#000"></div>
<div class="a btn" style="left:834px;top:18px;width:16px;height:14px"></div>
<div class="a" style="left:837px;top:20px;width:9px;height:9px;border:1px solid #000;border-top-width:2px"></div>
<div class="a btn" style="left:852px;top:18px;width:16px;height:14px"></div>
<svg class="a" style="left:852px;top:18px" width="16" height="14"><path d="M4.5 3.5 L11 10 M11 3.5 L4.5 10" stroke="#000" stroke-width="1.5"/></svg>
<svg class="a" style="left:20px;top:36px" width="15" height="15"><rect x="0.5" y="0.5" width="14" height="14" fill="#e8e8e8" stroke="#303030"/><rect x="1" y="1" width="13" height="6" fill="#f8f8f8"/><path d="M2 3 H13" stroke="#c090c0"/><path d="M2 5 H13" stroke="#90c090"/><rect x="1" y="8" width="13" height="6" fill="#303030"/><rect x="2" y="9" width="3" height="4" fill="#e02020"/><rect x="6" y="9" width="3" height="4" fill="#2030d0"/><rect x="10" y="9" width="3" height="4" fill="#20c020"/></svg>
<div id="f15e4e4aca3" class="a t fit " style="left:42px;top:36px;font-size:14px;color:#808080;text-shadow:1px 1px #fff;;--w:43px;transform:scaleX(0.5811);transform-origin:left top">ファイル(<u>F</u>)</div>
<div id="f941e7533a2" class="a t fit " style="left:98px;top:36px;font-size:14px;color:#000;;--w:40px;transform:scaleX(0.8511);transform-origin:left top">表示(<u>D</u>)</div>
<div id="f7758c6e3a4" class="a t fit " style="left:152px;top:36px;font-size:14px;color:#000;;--w:39px;transform:scaleX(0.8478);transform-origin:left top">設定(<u>Z</u>)</div>
<div id="f7ffd01d3ff" class="a t fit " style="left:206px;top:36px;font-size:14px;color:#000;;--w:38px;transform:scaleX(0.8085);transform-origin:left top">測定(<u>S</u>)</div>
<div id="f719cee9c4c" class="a t fit " style="left:258px;top:36px;font-size:14px;color:#000;;--w:54px;transform:scaleX(0.5806);transform-origin:left top">ウィンドウ(<u>W</u>)</div>
<div id="f036535e0d4" class="a t fit " style="left:327px;top:36px;font-size:14px;color:#000;;--w:40px;transform:scaleX(0.6557);transform-origin:left top">ヘルプ(<u>H</u>)</div>
<div class="a btn" style="left:818px;top:37px;width:16px;height:14px"></div>
<div class="a" style="left:822px;top:46px;width:6px;height:2px;background:#000"></div>
<div class="a btn" style="left:834px;top:37px;width:16px;height:14px"></div>
<div class="a" style="left:839px;top:39px;width:6px;height:6px;border:1px solid #000;border-top-width:2px"></div>
<div class="a" style="left:837px;top:42px;width:6px;height:6px;border:1px solid #000;border-top-width:2px;background:#d4d0c8"></div>
<div class="a btn" style="left:852px;top:37px;width:16px;height:14px"></div>
<svg class="a" style="left:852px;top:37px" width="16" height="14"><path d="M4.5 3.5 L11 10 M11 3.5 L4.5 10" stroke="#000" stroke-width="1.5"/></svg>
<div class="a thinr" style="left:15px;top:55px;width:855px;height:32px"></div>
<div class="a t" style="left:23px;top:58px;width:25px;height:25px;background:repeating-conic-gradient(#fff 0 25%,#d4d0c8 0 50%) 0 0/2px 2px;box-shadow:inset 1px 1px #404040,inset -1px -1px #fff,inset 2px 2px #808080;font-size:11px;text-align:center;line-height:27px;padding-left:1px">D1</div>
<div class="a btn t" style="left:48px;top:58px;width:25px;height:25px;font-size:11px;text-align:center;line-height:24px">D2</div>
<div class="a btn t" style="left:73px;top:58px;width:25px;height:25px;font-size:11px;text-align:center;line-height:24px">D3</div>
<div class="a btn t" style="left:105px;top:58px;width:25px;height:25px;font-size:11px;text-align:center;line-height:24px">Y1</div>
<div class="a btn t" style="left:130px;top:58px;width:25px;height:25px;font-size:11px;text-align:center;line-height:24px">Y2</div>
<div class="a btn t" style="left:155px;top:58px;width:25px;height:25px;font-size:11px;text-align:center;line-height:24px">Y3</div>
<div class="a btn" style="left:187px;top:58px;width:25px;height:25px"><svg class="a" style="left:0;top:0" width="25" height="25" viewBox="0 0 25 25"><polygon points="12,3 21,12 15,12 15,21 10,21 10,12 3,12"/></svg></div>
<div class="a btn" style="left:212px;top:58px;width:25px;height:25px"><svg class="a" style="left:0;top:0" width="25" height="25" viewBox="0 0 25 25"><polygon points="12,21 21,12 15,12 15,3 10,3 10,12 3,12"/></svg></div>
<div class="a btn" style="left:237px;top:58px;width:25px;height:25px"><svg class="a" style="left:0;top:0" width="25" height="25" viewBox="0 0 25 25"><polygon points="12,3 21,11 3,11"/><polygon points="12,21 21,13 3,13"/></svg></div>
<div class="a btn" style="left:262px;top:58px;width:25px;height:25px"><svg class="a" style="left:0;top:0" width="25" height="25" viewBox="0 0 25 25"><polygon points="3,3 21,3 12,12"/><polygon points="3,21 21,21 12,12"/></svg></div>
<div class="a btn" style="left:294px;top:58px;width:25px;height:25px"><svg class="a" style="left:0;top:0" width="25" height="25" viewBox="0 0 25 25"><polygon points="3,12 12,3 12,21"/><polygon points="11,12 20,3 20,21"/></svg></div>
<div class="a btn" style="left:319px;top:58px;width:25px;height:25px"><svg class="a" style="left:0;top:0" width="25" height="25" viewBox="0 0 25 25"><polygon points="3,12 12,3 12,10 22,10 22,14 12,14 12,21"/></svg></div>
<div class="a btn" style="left:344px;top:58px;width:25px;height:25px"><svg class="a" style="left:0;top:0" width="25" height="25" viewBox="0 0 25 25"><rect x="6" y="6" width="12" height="12"/></svg></div>
<div class="a btn" style="left:369px;top:58px;width:25px;height:25px"><svg class="a" style="left:0;top:0" width="25" height="25" viewBox="0 0 25 25"><polygon points="22,12 13,3 13,10 3,10 3,14 13,14 13,21"/></svg></div>
<div class="a btn" style="left:394px;top:58px;width:25px;height:25px"><svg class="a" style="left:0;top:0" width="25" height="25" viewBox="0 0 25 25"><polygon points="21,12 12,3 12,21"/><polygon points="13,12 4,3 4,21"/></svg></div>
<div class="a btn" style="left:419px;top:58px;width:25px;height:25px"><svg class="a" style="left:0;top:0" width="25" height="25" viewBox="0 0 25 25"><polygon points="3,12 11,3 11,21"/><polygon points="21,12 13,3 13,21"/></svg></div>
<div class="a btn" style="left:444px;top:58px;width:25px;height:25px"><svg class="a" style="left:0;top:0" width="25" height="25" viewBox="0 0 25 25"><polygon points="3,3 11,12 3,21"/><polygon points="21,3 13,12 21,21"/></svg></div>
<div class="a btn" style="left:479px;top:58px;width:25px;height:25px"><svg class="a" style="left:0;top:0" width="25" height="25" viewBox="0 0 25 25"><g stroke-width="1" fill="none"><path d="M6.5 5 V19.5 H20" stroke="#000"/><path d="M5 9.5 H20 M5 13.5 H20 M5 16.5 H20" stroke="#909090"/><path d="M7 17 L13 8 L19 17" stroke="#e00000"/><path d="M13.5 5 V19" stroke="#0000c0"/><path d="M8 20.5 H9 M11 20.5 H12 M14 20.5 H15 M17 20.5 H18" stroke="#000"/></g></svg></div>
<div class="a" style="left:23px;top:95px;width:839px;height:838px;box-shadow:inset 1px 1px #fff,inset -1px -1px #808080"></div>
<div class="a" style="left:31px;top:103px;width:823px;height:770px;background:#fff"></div>
<div class="a" style="left:31px;top:875px;width:136px;height:39px;background:#fff"></div>
<div class="a mono t" style="left:32px;top:875px;font-size:14px;letter-spacing:1.6px;color:#800000;transform:scaleX(.7);transform-origin:0 0">Comp-low</div>
<div class="a mono t" style="left:32px;top:888px;font-size:14px;letter-spacing:1.6px;color:#800000;transform:scaleX(.7);transform-origin:0 0">CH1 [℃]</div>
<div class="a mono t" style="left:32px;top:901px;font-size:14px;letter-spacing:1.6px;color:#800000;transform:scaleX(.7);transform-origin:0 0">-----</div>
<div class="a" style="left:168px;top:875px;width:136px;height:39px;background:#fff"></div>
<div class="a mono t" style="left:169px;top:875px;font-size:14px;letter-spacing:1.6px;color:#808000;transform:scaleX(.7);transform-origin:0 0">Comp-High</div>
<div class="a mono t" style="left:169px;top:888px;font-size:14px;letter-spacing:1.6px;color:#808000;transform:scaleX(.7);transform-origin:0 0">CH2 [℃]</div>
<div class="a mono t" style="left:169px;top:901px;font-size:14px;letter-spacing:1.6px;color:#808000;transform:scaleX(.7);transform-origin:0 0">-----</div>
<div class="a" style="left:305px;top:875px;width:136px;height:39px;background:#fff"></div>
<div class="a mono t" style="left:306px;top:875px;font-size:14px;letter-spacing:1.6px;color:#0070c0;transform:scaleX(.7);transform-origin:0 0">MDF-330-2(-50)</div>
<div class="a mono t" style="left:306px;top:888px;font-size:14px;letter-spacing:1.6px;color:#0070c0;transform:scaleX(.7);transform-origin:0 0">CH3 [℃]</div>
<div class="a mono t" style="left:306px;top:901px;font-size:14px;letter-spacing:1.6px;color:#0070c0;transform:scaleX(.7);transform-origin:0 0">-63.1</div>
<div class="a" style="left:442px;top:875px;width:136px;height:39px;background:#fff"></div>
<div class="a mono t" style="left:443px;top:888px;font-size:14px;letter-spacing:1.6px;color:#00c000;transform:scaleX(.7);transform-origin:0 0">CH4 []</div>
<div class="a mono t" style="left:443px;top:901px;font-size:14px;letter-spacing:1.6px;color:#00c000;transform:scaleX(.7);transform-origin:0 0">-----</div>
<div class="a" style="left:579px;top:875px;width:136px;height:39px;background:#fff"></div>
<div class="a mono t" style="left:580px;top:875px;font-size:14px;letter-spacing:1.6px;color:#000;transform:scaleX(.7);transform-origin:0 0">MDF-190</div>
<div class="a mono t" style="left:580px;top:888px;font-size:14px;letter-spacing:1.6px;color:#000;transform:scaleX(.7);transform-origin:0 0">CH5 [℃]</div>
<div class="a mono t" style="left:580px;top:901px;font-size:14px;letter-spacing:1.6px;color:#000;transform:scaleX(.7);transform-origin:0 0">-61.6</div>
<div class="a" style="left:716px;top:875px;width:136px;height:39px;background:#fff"></div>
<div class="a mono t" style="left:717px;top:875px;font-size:14px;letter-spacing:1.6px;color:#c00000;transform:scaleX(.7);transform-origin:0 0">2110Temp</div>
<div class="a mono t" style="left:717px;top:888px;font-size:14px;letter-spacing:1.6px;color:#c00000;transform:scaleX(.7);transform-origin:0 0">CH6 [mV]</div>
<div class="a mono t" style="left:717px;top:901px;font-size:14px;letter-spacing:1.6px;color:#c00000;transform:scaleX(.7);transform-origin:0 0">-82.7</div>
<div class="a" style="left:23px;top:933px;width:839px;height:39px;box-shadow:inset 1px 1px #fff,inset -1px -1px #808080"></div>
<div class="a btn" style="left:31px;top:941px;width:81px;height:25px"></div>
<div id="f4a98c69c28" class="a t fit " style="left:38px;top:944px;font-size:16px;color:#000;;--w:68px;transform:scaleX(0.5312);transform-origin:left top">アラームリセット</div>
<div class="a" style="left:119px;top:941px;width:734px;height:25px;background:#fff;box-shadow:inset 1px 1px #808080,inset 2px 2px #404040,inset -1px -1px #fff,inset -2px -2px #d4d0c8"></div>
<div class="a btn" style="left:835px;top:943px;width:16px;height:22px"></div>
<div class="a" style="left:839px;top:952px;border-left:4px solid transparent;border-right:4px solid transparent;border-top:4px solid #000"></div>
<div class="a thins" style="left:15px;top:988px;width:150px;height:18px"></div>
<div id="ffcc735ece6" class="a t fit " style="left:17px;top:989px;font-size:15px;color:#000;;--w:76px;transform:scaleX(0.6333);transform-origin:left top">保存ウェイト！！</div>
<div class="a thins" style="left:167px;top:988px;width:702px;height:18px"></div>
<svg class="a" style="left:855px;top:993px" width="13" height="13"><g stroke-width="1"><line x1="12" y1="1" x2="1" y2="12" stroke="#fff"/><line x1="12" y1="2" x2="2" y2="12" stroke="#808080"/><line x1="12" y1="5" x2="5" y2="12" stroke="#fff"/><line x1="12" y1="6" x2="6" y2="12" stroke="#808080"/><line x1="12" y1="9" x2="9" y2="12" stroke="#fff"/><line x1="12" y1="10" x2="10" y2="12" stroke="#808080"/></g></svg>
<svg class="a" style="left:0;top:0" width="880" height="880" viewBox="0 0 880 880"><line x1="87" y1="125.5" x2="94" y2="125.5" stroke="#800000" stroke-width="1"/><line x1="87" y1="193.5" x2="94" y2="193.5" stroke="#800000" stroke-width="1"/><line x1="87" y1="261.5" x2="94" y2="261.5" stroke="#800000" stroke-width="1"/><line x1="87" y1="328.5" x2="94" y2="328.5" stroke="#800000" stroke-width="1"/><line x1="87" y1="396.5" x2="94" y2="396.5" stroke="#800000" stroke-width="1"/><line x1="87" y1="464.5" x2="94" y2="464.5" stroke="#800000" stroke-width="1"/><line x1="87" y1="532.5" x2="94" y2="532.5" stroke="#800000" stroke-width="1"/><line x1="87" y1="600.5" x2="94" y2="600.5" stroke="#800000" stroke-width="1"/><line x1="87" y1="667.5" x2="94" y2="667.5" stroke="#800000" stroke-width="1"/><line x1="87" y1="735.5" x2="94" y2="735.5" stroke="#800000" stroke-width="1"/><line x1="87" y1="803.5" x2="94" y2="803.5" stroke="#800000" stroke-width="1"/><line x1="94.5" y1="125" x2="94.5" y2="827" stroke="#800000" stroke-width="1"/><line x1="94" y1="803.5" x2="775.5" y2="803.5" stroke="#000" stroke-width="1"/><line x1="775.5" y1="803" x2="775.5" y2="826" stroke="#000" stroke-width="1"/><line x1="94" y1="826.5" x2="776" y2="826.5" stroke="#000" stroke-width="1"/><line x1="95.5" y1="826" x2="95.5" y2="834" stroke="#000" stroke-width="1"/><line x1="208.5" y1="826" x2="208.5" y2="834" stroke="#000" stroke-width="1"/><line x1="321.5" y1="826" x2="321.5" y2="834" stroke="#000" stroke-width="1"/><line x1="435.5" y1="826" x2="435.5" y2="834" stroke="#000" stroke-width="1"/><line x1="548.5" y1="826" x2="548.5" y2="834" stroke="#000" stroke-width="1"/><line x1="661.5" y1="826" x2="661.5" y2="834" stroke="#000" stroke-width="1"/><line x1="774.5" y1="826" x2="774.5" y2="834" stroke="#000" stroke-width="1"/><polyline fill="none" stroke="#1a80d4" stroke-width="1.4" points="95.0,328.7 96.5,330.9 98.0,335.1 99.5,338.8 101.0,343.4 102.5,345.6 104.0,345.3 105.5,344.3 107.0,341.5 108.5,339.6 110.0,336.8 111.5,334.5 113.0,332.6 114.5,330.8 116.0,327.6 117.5,325.4 119.0,323.5 120.5,321.6 122.0,318.8 123.5,316.3 125.0,314.6 126.5,311.2 128.0,309.8 129.5,306.8 131.0,304.3 132.5,302.0 134.0,300.3 135.5,300.2 137.0,300.9 138.5,304.7 140.0,309.0 141.5,313.1 143.0,317.8 144.5,321.6 146.0,326.0 147.5,330.7 149.0,335.7 150.5,339.8 152.0,343.9 153.5,347.6 155.0,349.0 156.5,348.2 158.0,346.9 159.5,344.4 161.0,341.5 162.5,339.5 164.0,337.0 165.5,335.0 167.0,332.4 168.5,329.5 170.0,328.0 171.5,324.5 173.0,322.5 174.5,320.5 176.0,317.4 177.5,315.4 179.0,312.4 180.5,310.8 182.0,308.5 183.5,305.9 185.0,303.8 186.5,301.0 188.0,300.2 189.5,300.7 191.0,303.4 192.5,307.3 194.0,312.1 195.5,316.7 197.0,320.5 198.5,325.1 200.0,328.8 201.5,334.0 203.0,338.4 204.5,343.1 206.0,346.7 207.5,348.5 209.0,348.8 210.5,347.7 212.0,344.7 213.5,342.8 215.0,340.1 216.5,337.7 218.0,335.3 219.5,333.7 221.0,330.6 222.5,328.4 224.0,326.2 225.5,324.4 227.0,321.1 228.5,319.2 230.0,317.0 231.5,315.0 233.0,312.6 234.5,310.2 236.0,307.2 237.5,305.0 239.0,302.6 240.5,301.5 242.0,301.4 243.5,302.2 245.0,305.5 246.5,309.4 248.0,313.3 249.5,317.5 251.0,321.5 252.5,325.0 254.0,328.6 255.5,333.0 257.0,336.8 258.5,341.0 260.0,345.0 261.5,347.0 263.0,347.3 264.5,346.2 266.0,344.2 267.5,341.1 269.0,339.9 270.5,337.5 272.0,335.3 273.5,332.9 275.0,330.2 276.5,327.9 278.0,325.3 279.5,323.6 281.0,320.7 282.5,318.4 284.0,316.3 285.5,314.0 287.0,311.9 288.5,309.3 290.0,307.0 291.5,304.9 293.0,302.9 294.5,302.4 296.0,303.1 297.5,306.9 299.0,310.1 300.5,313.3 302.0,317.2 303.5,321.1 305.0,324.8 306.5,328.3 308.0,332.9 309.5,336.8 311.0,340.0 312.5,343.5 314.0,345.8 315.5,346.8 317.0,346.0 318.5,343.8 320.0,342.0 321.5,338.6 323.0,335.9 324.5,334.5 326.0,331.5 327.5,328.5 329.0,326.4 330.5,323.3 332.0,321.3 333.5,319.3 335.0,316.7 336.5,313.9 338.0,310.9 339.5,308.5 341.0,305.7 342.5,303.9 344.0,301.1 345.5,298.8 347.0,295.8 348.5,293.1 350.0,291.3 351.5,289.5 353.0,288.7 354.5,290.6 356.0,294.7 357.5,299.8 359.0,304.7 360.5,310.5 362.0,315.7 363.5,320.8 365.0,326.3 366.5,332.0 368.0,336.9 369.5,341.0 371.0,342.5 372.5,340.8 374.0,339.3 375.5,337.1 377.0,334.7 378.5,331.7 380.0,329.2 381.5,326.9 383.0,324.6 384.5,322.2 386.0,320.4 387.5,318.4 389.0,316.1 390.5,313.3 392.0,311.2 393.5,309.1 395.0,305.9 396.5,304.3 398.0,302.2 399.5,299.8 401.0,297.4 402.5,294.8 404.0,292.8 405.5,293.4 407.0,295.0 408.5,299.3 410.0,304.0 411.5,307.9 413.0,312.5 414.5,317.7 416.0,322.0 417.5,325.9 419.0,330.0 420.5,333.0 422.0,334.7 423.5,333.5 425.0,330.7 426.5,329.3 428.0,327.3 429.5,324.7 431.0,322.1 432.5,320.1 434.0,317.4 435.5,315.1 437.0,314.0 438.5,311.4 440.0,309.1 441.5,307.4 443.0,304.6 444.5,302.9 446.0,300.6 447.5,297.7 449.0,295.5 450.5,293.4 452.0,291.2 453.5,290.1 455.0,289.8 456.5,292.3 458.0,295.9 459.5,301.4 461.0,305.4 462.5,310.1 464.0,314.9 465.5,320.0 467.0,324.0 468.5,329.3 470.0,333.4 471.5,337.8 473.0,341.0 474.5,341.6 476.0,341.3 477.5,339.1 479.0,336.7 480.5,335.5 482.0,332.6 483.5,330.7 485.0,328.8 486.5,326.5 488.0,324.0 489.5,322.0 491.0,319.9 492.5,318.0 494.0,315.0 495.5,313.3 497.0,310.8 498.5,308.6 500.0,307.0 501.5,304.5 503.0,302.4 504.5,300.4 506.0,298.8 507.5,297.6 509.0,299.3 510.5,302.3 512.0,306.4 513.5,310.9 515.0,314.9 516.5,319.3 518.0,323.5 519.5,328.4 521.0,332.4 522.5,336.6 524.0,339.7 525.5,340.1 527.0,339.8 528.5,338.6 530.0,336.5 531.5,333.6 533.0,331.6 534.5,330.0 536.0,327.5 537.5,325.7 539.0,323.5 540.5,322.2 542.0,320.4 543.5,318.5 545.0,315.6 546.5,314.3 548.0,312.2 549.5,309.6 551.0,308.5 552.5,306.6 554.0,303.7 555.5,302.6 557.0,299.9 558.5,298.0 560.0,296.7 561.5,295.1 563.0,294.2 564.5,296.4 566.0,299.7 567.5,303.2 569.0,306.8 570.5,310.7 572.0,315.0 573.5,317.9 575.0,322.4 576.5,326.0 578.0,329.3 579.5,333.3 581.0,336.5 582.5,337.6 584.0,336.4 585.5,335.9 587.0,333.6 588.5,331.8 590.0,328.8 591.5,327.0 593.0,324.7 594.5,323.6 596.0,320.9 597.5,318.7 599.0,317.1 600.5,315.7 602.0,313.5 603.5,310.8 605.0,308.7 606.5,307.6 608.0,305.2 609.5,303.3 611.0,300.6 612.5,298.5 614.0,297.3 615.5,295.0 617.0,293.2 618.5,294.5 620.0,296.4 621.5,300.4 623.0,303.9 624.5,309.3 626.0,312.8 627.5,318.2 629.0,322.1 630.5,326.5 632.0,331.2 633.5,335.9 635.0,338.5 636.5,340.0 638.0,340.2 639.5,338.4 641.0,336.4 642.5,334.7 644.0,332.7 645.5,331.1 647.0,329.4 648.5,327.5 650.0,326.3 651.5,323.9 653.0,322.3 654.5,320.1 656.0,318.4 657.5,316.2 659.0,314.7 660.5,312.6 662.0,311.6 663.5,309.6 665.0,307.3 666.5,305.8 668.0,304.5 669.5,301.7 671.0,300.8 672.5,299.3 674.0,299.6 675.5,301.9 677.0,304.4 678.5,307.9 680.0,311.6 681.5,315.4 683.0,318.0 684.5,322.1 686.0,325.3 687.5,328.7 689.0,331.8 690.5,334.9 692.0,336.6 693.5,337.0 695.0,335.6 696.5,334.3 698.0,331.5 699.5,329.2 701.0,326.9 702.5,325.5 704.0,323.4 705.5,320.9 707.0,318.2 708.5,315.9 710.0,313.7 711.5,311.7 713.0,309.1 714.5,307.2 716.0,304.8 717.5,303.4 719.0,301.2 720.5,298.4 722.0,296.0 723.5,295.5 725.0,295.2 726.5,297.9 728.0,301.6 729.5,306.7 731.0,311.6 732.5,316.4 734.0,320.7 735.5,325.9 737.0,330.0 738.5,335.1 740.0,339.4 741.5,343.4 743.0,344.6 744.5,344.0 746.0,342.5 747.5,340.2 749.0,338.4 750.5,336.1 752.0,334.1 753.5,331.8 755.0,329.6 756.5,327.6 758.0,324.8 759.5,322.5 761.0,321.0 762.5,317.8 764.0,316.2 765.5,313.9 767.0,310.9 768.5,309.7 770.0,307.8 771.5,306.0"/><polyline fill="none" stroke="#000" stroke-width="1.45" stroke-linejoin="miter" points="95.0,318.9 101.9,299.9 113.4,322.6 123.7,300.7 135.2,323.2 145.4,301.2 156.9,322.4 167.2,301.5 178.7,323.5 188.9,302.0 200.4,323.7 210.7,301.8 222.2,324.1 232.4,301.3 243.9,323.3 254.2,300.6 265.6,323.0 275.9,300.6 287.4,322.1 297.6,300.1 309.1,322.2 319.4,299.2 330.9,321.2 341.1,299.0 352.6,320.9 353.4,319.0 362.9,296.5 371.2,312.6 371.7,298.3 372.2,312.6 376.6,327.8 377.2,299.6 377.8,319.2 384.9,304.9 395.0,322.0 396.1,317.7 406.4,297.1 417.9,317.9 428.1,296.9 439.6,317.6 449.9,295.9 461.4,316.3 471.6,295.7 483.1,317.5 493.4,294.9 504.9,316.2 515.1,294.3 526.6,316.3 536.9,293.5 548.4,315.6 558.6,293.1 570.1,315.2 580.4,292.6 591.9,313.8 602.1,292.2 613.6,311.9 623.9,290.7 635.4,312.8 645.6,290.1 657.1,312.0 667.4,289.2 678.9,310.3 689.1,288.3 700.6,309.7 710.9,287.7 722.4,308.9 732.6,286.8 744.1,307.0 754.4,285.5 765.9,307.9 773.0,284.1"/><polyline fill="none" stroke="#d81010" stroke-width="1.7" points="95.0,560.2 95.7,560.2 96.4,563.1 97.1,561.6 97.8,559.5 98.5,559.5 99.2,561.4 99.9,562.9 100.6,559.3 101.3,559.8 102.0,561.2 102.7,559.7 103.4,561.2 104.1,561.1 104.8,559.6 105.5,560.0 106.2,562.0 106.9,559.4 107.6,558.9 108.3,562.3 109.0,561.8 109.7,562.2 110.4,558.7 111.1,560.7 111.8,558.6 112.5,561.6 113.2,560.5 113.9,560.5 114.6,558.4 115.3,562.4 116.0,559.4 116.7,558.9 117.4,562.4 118.1,560.4 118.8,559.4 119.5,559.4 120.2,562.5 120.9,558.5 121.6,562.0 122.3,559.0 123.0,559.0 123.7,559.0 124.4,559.0 125.1,558.5 125.8,561.5 126.5,559.0 127.2,562.5 127.9,558.5 128.6,560.5 129.3,559.5 130.0,559.6 130.7,560.6 131.4,561.6 132.1,562.6 132.8,561.6 133.5,562.6 134.2,562.1 134.9,562.6 135.6,558.6 136.3,559.6 137.0,561.6 137.7,561.6 138.4,560.6 139.1,559.6 139.8,562.2 140.5,560.7 141.2,562.2 141.9,561.7 142.6,562.2 143.3,559.2 144.0,561.7 144.7,560.7 145.4,558.7 146.1,558.7 146.8,558.7 147.5,561.7 148.2,558.7 148.9,559.3 149.6,562.3 150.3,560.8 151.0,562.8 151.7,559.3 152.4,562.3 153.1,559.8 153.8,561.8 154.5,560.8 155.2,559.3 155.9,561.8 156.6,558.8 157.3,558.8 158.0,562.8 158.7,558.9 159.4,559.4 160.1,560.9 160.8,559.9 161.5,560.9 162.2,558.9 162.9,562.9 163.6,562.9 164.3,560.9 165.0,560.9 165.7,558.9 166.4,562.9 167.1,562.9 167.8,561.9 168.5,561.0 169.2,562.0 169.9,560.0 170.6,560.0 171.3,561.0 172.0,563.0 172.7,561.0 173.4,561.0 174.1,560.9 174.8,559.8 175.5,561.8 176.2,560.7 176.9,559.1 177.6,559.6 178.3,559.0 179.0,558.4 179.7,560.4 180.4,560.3 181.1,560.2 181.8,558.7 182.5,561.1 183.2,558.0 183.9,558.5 184.6,560.9 185.3,559.8 186.0,559.8 186.7,558.2 187.4,561.6 188.1,558.1 188.8,561.0 189.5,560.4 190.2,561.4 190.9,560.3 191.6,560.2 192.3,559.2 193.0,557.1 193.7,557.5 194.4,559.0 195.1,559.1 195.8,560.2 196.5,561.3 197.2,557.3 197.9,559.4 198.6,558.0 199.3,560.5 200.0,557.6 200.7,561.2 201.4,560.8 202.1,561.8 202.8,559.9 203.5,561.5 204.2,558.1 204.9,561.6 205.6,558.2 206.3,561.3 207.0,560.3 207.7,558.9 208.4,560.5 209.1,561.6 209.8,562.6 210.5,561.7 211.2,559.3 211.9,561.9 212.6,561.9 213.3,563.0 214.0,562.1 214.7,559.6 215.4,559.7 216.1,561.3 216.8,563.4 217.5,560.4 218.2,562.5 218.9,563.6 219.6,559.6 220.3,561.7 221.0,560.8 221.7,559.9 222.4,561.9 223.1,563.0 223.8,562.1 224.5,561.2 225.2,560.2 225.9,562.3 226.6,562.4 227.3,561.5 228.0,560.6 228.7,564.6 229.4,564.2 230.1,562.8 230.8,562.9 231.5,561.9 232.2,564.5 232.9,564.1 233.6,562.2 234.3,565.3 235.0,563.3 235.7,561.9 236.4,561.5 237.1,565.1 237.8,565.1 238.5,565.7 239.2,562.8 239.9,563.9 240.6,564.0 241.3,564.0 242.0,562.6 242.7,564.2 243.4,565.8 244.1,562.3 244.8,564.4 245.5,565.5 246.2,562.6 246.9,566.2 247.6,563.2 248.3,562.8 249.0,564.9 249.7,565.0 250.4,567.0 251.1,566.1 251.8,566.6 252.5,567.1 253.2,566.2 253.9,566.7 254.6,566.7 255.3,567.2 256.0,565.3 256.7,563.3 257.4,566.3 258.1,563.4 258.8,565.4 259.5,563.4 260.2,565.5 260.9,567.5 261.6,565.5 262.3,565.6 263.0,564.1 263.7,566.6 264.4,565.7 265.1,567.2 265.8,567.2 266.5,564.3 267.2,567.2 267.9,565.4 268.6,563.6 269.3,566.2 270.0,562.9 270.7,562.6 271.4,563.8 272.1,563.5 272.8,563.1 273.5,563.8 274.2,562.5 274.9,564.2 275.6,563.9 276.3,559.5 277.0,559.7 277.7,558.9 278.4,562.7 279.1,559.5 279.8,562.3 280.5,559.0 281.2,559.8 281.9,558.1 282.6,558.4 283.3,560.1 284.0,560.4 284.7,560.2 285.4,560.5 286.1,559.7 286.8,558.0 287.5,558.8 288.2,555.6 288.9,556.4 289.6,558.1 290.3,555.0 291.0,557.0 291.7,556.9 292.4,558.9 293.1,558.4 293.8,555.9 294.5,554.9 295.2,556.8 295.9,556.8 296.6,555.3 297.3,556.8 298.0,557.7 298.7,556.7 299.4,554.7 300.1,558.7 300.8,558.7 301.5,555.6 302.2,557.6 302.9,555.6 303.6,554.6 304.3,558.5 305.0,557.5 305.7,556.5 306.4,555.0 307.1,555.0 307.8,554.9 308.5,554.9 309.2,557.9 309.9,554.9 310.6,554.8 311.3,557.3 312.0,558.3 312.7,557.3 313.4,555.3 314.1,557.2 314.8,557.2 315.5,555.2 316.2,554.7 316.9,557.1 317.6,557.6 318.3,556.1 319.0,554.1 319.7,554.5 320.4,557.0 321.1,557.0 321.8,556.0 322.5,558.0 323.2,555.9 323.9,555.9 324.6,555.9 325.3,557.9 326.0,556.8 326.7,557.8 327.4,557.3 328.1,556.0 328.8,554.6 329.5,557.3 330.2,556.5 330.9,556.7 331.6,557.8 332.3,558.0 333.0,557.2 333.7,558.9 334.4,556.6 335.1,559.7 335.8,556.4 336.5,558.1 337.2,558.3 337.9,559.9 338.6,559.6 339.3,558.8 340.0,560.5 340.7,560.7 341.4,558.3 342.1,559.5 342.8,560.7 343.5,558.4 344.2,560.0 344.9,561.0 345.6,560.0 346.3,561.4 347.0,557.9 347.7,561.4 348.4,558.9 349.1,558.3 349.8,559.8 350.5,560.8 351.2,559.8 351.9,561.8 352.6,561.7 353.3,559.7 354.0,557.7 354.7,559.7 355.4,557.7 356.1,558.6 356.8,559.6 357.5,558.6 358.2,557.6 358.9,558.1 359.6,557.5 360.3,558.0 361.0,558.0 361.7,557.5 362.4,559.5 363.1,557.9 363.8,560.9 364.5,557.4 365.2,557.4 365.9,559.3 366.6,560.8 367.3,560.3 368.0,557.3 368.7,557.3 369.4,560.2 370.1,559.2 370.8,557.2 371.5,558.2 372.2,557.2 372.9,559.1 373.6,559.1 374.3,557.1 375.0,560.6 375.7,561.1 376.4,558.0 377.1,558.0 377.8,556.6 378.5,551.0 379.2,545.8 379.9,545.9 380.6,553.1 381.3,557.6 382.0,555.2 382.7,555.3 383.4,557.9 384.1,555.1 384.8,555.7 385.5,555.8 386.2,556.9 386.9,557.1 387.6,555.2 388.3,559.3 389.0,558.5 389.7,556.1 390.4,556.7 391.1,557.8 391.8,560.0 392.5,559.6 393.2,558.3 393.9,556.4 394.6,558.6 395.3,557.8 396.0,559.9 396.7,557.1 397.4,560.2 398.1,561.4 398.8,558.6 399.5,560.7 400.2,559.9 400.9,558.0 401.6,559.2 402.3,558.4 403.0,561.9 403.7,560.3 404.4,559.2 405.1,561.2 405.8,561.1 406.5,560.1 407.2,560.0 407.9,561.4 408.6,559.9 409.3,557.8 410.0,561.7 410.7,558.2 411.4,557.6 412.1,558.1 412.8,560.5 413.5,557.4 414.2,557.4 414.9,560.8 415.6,561.3 416.3,561.2 417.0,558.1 417.7,559.1 418.4,559.0 419.1,561.0 419.8,560.9 420.5,559.8 421.2,560.8 421.9,560.7 422.6,557.6 423.3,560.6 424.0,556.5 424.7,558.5 425.4,558.4 426.1,557.3 426.8,559.8 427.5,556.2 428.2,559.7 428.9,558.1 429.6,560.0 430.3,558.0 431.0,557.9 431.7,556.8 432.4,557.7 433.1,559.1 433.8,557.5 434.5,557.4 435.2,555.4 435.9,556.3 436.6,557.2 437.3,557.1 438.0,557.0 438.7,557.9 439.4,555.8 440.1,558.7 440.8,555.2 441.5,555.6 442.2,557.5 442.9,556.4 443.6,557.8 444.3,554.7 445.0,555.1 445.7,557.6 446.4,554.5 447.1,557.9 447.8,554.8 448.5,554.2 449.2,557.6 449.9,556.5 450.6,553.9 451.3,556.4 452.0,556.8 452.7,556.8 453.4,555.3 454.1,556.2 454.8,554.2 455.5,553.2 456.2,554.1 456.9,553.6 457.6,556.6 458.3,553.0 459.0,554.0 459.7,553.4 460.4,554.9 461.1,554.9 461.8,556.3 462.5,556.8 463.2,554.8 463.9,553.2 464.6,552.7 465.3,556.2 466.0,553.1 466.7,552.6 467.4,556.0 468.1,553.5 468.8,556.0 469.5,555.9 470.2,554.4 470.9,556.4 471.6,555.3 472.3,553.3 473.0,554.3 473.7,552.7 474.4,552.7 475.1,552.7 475.8,555.6 476.5,554.1 477.2,554.0 477.9,555.0 478.6,553.3 479.3,553.1 480.0,553.0 480.7,553.3 481.4,557.2 482.1,556.0 482.8,555.4 483.5,558.7 484.2,558.1 484.9,557.4 485.6,557.8 486.3,558.1 487.0,558.5 487.7,560.3 488.4,557.5 489.1,559.1 489.8,560.7 490.5,560.3 491.2,557.3 491.9,557.9 492.6,558.5 493.3,560.6 494.0,561.1 494.7,561.7 495.4,558.8 496.1,558.9 496.8,559.9 497.5,561.0 498.2,559.1 498.9,562.2 499.6,560.2 500.3,560.3 501.0,559.4 501.7,558.7 502.4,558.1 503.1,558.4 503.8,559.7 504.5,559.5 505.2,560.9 505.9,561.2 506.6,561.0 507.3,559.8 508.0,557.7 508.7,558.5 509.4,558.3 510.1,558.1 510.8,558.0 511.5,555.8 512.2,556.6 512.9,558.5 513.6,556.3 514.3,557.1 515.0,556.9 515.7,556.8 516.4,557.6 517.1,555.4 517.8,554.2 518.5,557.1 519.2,553.9 519.9,554.9 520.6,554.5 521.3,556.2 522.0,554.8 522.7,556.5 523.4,558.6 524.1,556.8 524.8,554.9 525.5,555.0 526.2,559.2 526.9,557.3 527.6,559.5 528.3,556.6 529.0,558.8 529.7,557.9 530.4,556.5 531.1,559.0 531.8,558.0 532.5,558.1 533.2,559.6 533.9,556.6 534.6,558.1 535.3,556.6 536.0,556.2 536.7,556.7 537.4,556.7 538.1,559.2 538.8,558.2 539.5,558.3 540.2,557.3 540.9,556.8 541.6,559.3 542.3,559.3 543.0,557.3 543.7,559.9 544.4,559.4 545.1,556.4 545.8,559.9 546.5,559.4 547.2,556.5 547.9,560.5 548.6,560.5 549.3,558.5 550.0,558.5 550.7,556.6 551.4,559.6 552.1,557.1 552.8,559.6 553.5,556.6 554.2,558.6 554.9,557.7 555.6,557.7 556.3,558.7 557.0,558.7 557.7,558.7 558.4,558.8 559.1,557.8 559.8,560.3 560.5,557.8 561.2,558.8 561.9,558.9 562.6,558.9 563.3,557.9 564.0,558.9 564.7,558.9 565.4,558.9 566.1,559.0 566.8,560.5 567.5,560.0 568.2,559.0 568.9,557.0 569.6,559.1 570.3,560.1 571.0,560.1 571.7,560.1 572.4,559.1 573.1,559.1 573.8,559.2 574.5,559.2 575.2,557.7 575.9,561.2 576.6,559.2 577.3,558.3 578.0,559.3 578.7,560.3 579.4,557.8 580.1,560.8 580.8,560.9 581.5,557.4 582.2,557.9 582.9,559.4 583.6,560.9 584.3,557.9 585.0,558.0 585.7,559.5 586.4,561.0 587.1,561.0 587.8,561.5 588.5,558.1 589.2,559.6 589.9,557.6 590.6,559.8 591.3,558.0 592.0,560.2 592.7,561.9 593.4,562.7 594.1,560.9 594.8,562.1 595.5,561.3 596.2,560.0 596.9,560.7 597.6,559.5 598.3,561.4 599.0,562.2 599.7,559.6 600.4,560.9 601.1,560.8 601.8,562.2 602.5,562.5 603.2,560.4 603.9,562.2 604.6,559.1 605.3,561.9 606.0,561.3 606.7,558.2 607.4,558.6 608.1,558.0 608.8,560.4 609.5,560.4 610.2,561.3 610.9,558.3 611.6,559.2 612.3,559.2 613.0,561.1 613.7,559.0 614.4,560.5 615.1,560.4 615.8,558.9 616.5,556.8 617.2,556.7 617.9,558.7 618.6,556.6 619.3,558.6 620.0,560.0 620.7,559.4 621.4,556.9 622.1,556.8 622.8,556.3 623.5,557.2 624.2,556.2 624.9,559.1 625.6,560.0 626.3,557.2 627.0,558.6 627.7,560.5 628.4,561.0 629.1,558.9 629.8,562.3 630.5,562.3 631.2,560.2 631.9,563.6 632.6,563.7 633.3,560.2 634.0,562.8 634.7,560.8 635.4,563.3 636.1,563.8 636.8,562.8 637.5,562.9 638.2,560.4 638.9,560.4 639.6,560.9 640.3,560.9 641.0,563.0 641.7,563.5 642.4,563.5 643.1,561.0 643.8,563.0 644.5,563.6 645.2,563.1 645.9,560.6 646.6,562.1 647.3,561.2 648.0,562.2 648.7,563.2 649.4,560.2 650.1,561.2 650.8,561.3 651.5,560.8 652.2,560.8 652.9,560.3 653.6,560.8 654.3,563.4 655.0,562.4 655.7,562.4 656.4,560.9 657.1,563.4 657.8,560.5 658.5,564.5 659.2,562.5 659.9,562.6 660.6,560.8 661.3,560.9 662.0,564.0 662.7,561.6 663.4,565.2 664.1,563.3 664.8,562.4 665.5,562.0 666.2,561.6 666.9,563.7 667.6,564.9 668.3,562.0 669.0,562.1 669.7,565.2 670.4,565.3 671.1,563.4 671.8,564.5 672.5,566.6 673.2,562.7 673.9,566.3 674.6,563.5 675.3,565.1 676.0,563.2 676.7,566.3 677.4,563.4 678.1,564.5 678.8,564.1 679.5,563.7 680.2,567.8 680.9,567.7 681.6,565.6 682.3,563.6 683.0,564.5 683.7,566.9 684.4,565.4 685.1,563.3 685.8,567.2 686.5,565.2 687.2,565.1 687.9,563.5 688.6,566.0 689.3,563.9 690.0,565.8 690.7,566.3 691.4,564.7 692.1,566.6 692.8,565.6 693.5,566.5 694.2,564.4 694.9,565.8 695.6,565.8 696.3,562.2 697.0,566.1 697.7,565.1 698.4,563.0 699.1,561.9 699.8,563.9 700.5,565.3 701.2,563.8 701.9,562.4 702.6,562.5 703.3,562.2 704.0,562.3 704.7,564.4 705.4,564.5 706.1,564.7 706.8,562.8 707.5,562.9 708.2,566.5 708.9,563.7 709.6,565.3 710.3,566.4 711.0,564.0 711.7,563.7 712.4,566.8 713.1,563.9 713.8,568.0 714.5,567.2 715.2,565.3 715.9,565.4 716.6,566.5 717.3,567.7 718.0,568.7 718.7,567.7 719.4,565.7 720.1,568.1 720.8,564.6 721.5,568.6 722.2,565.1 722.9,565.6 723.6,568.6 724.3,568.0 725.0,567.5 725.7,565.0 726.4,564.5 727.1,565.0 727.8,564.5 728.5,565.4 729.2,568.4 729.9,566.4 730.6,564.9 731.3,567.9 732.0,567.4 732.7,564.8 733.4,567.8 734.1,568.3 734.8,568.3 735.5,564.3 736.2,566.3 736.9,567.7 737.6,565.2 738.3,564.7 739.0,564.2 739.7,566.2 740.4,566.2 741.1,567.6 741.8,565.1 742.5,567.6 743.2,566.1 743.9,566.1 744.6,567.1 745.3,566.0 746.0,564.5 746.7,564.5 747.4,566.2 748.1,565.3 748.8,567.5 749.5,565.7 750.2,568.9 750.9,568.5 751.6,566.2 752.3,568.4 753.0,565.5 753.7,566.7 754.4,567.9 755.1,566.6 755.8,569.2 756.5,570.4 757.2,569.6 757.9,568.7 758.6,570.9 759.3,569.1 760.0,569.3 760.7,567.9 761.4,567.6 762.1,570.8 762.8,569.0 763.5,571.9 764.2,571.8 764.9,569.6 765.6,571.5 766.3,571.3 767.0,568.2 767.7,571.1 768.4,569.9 769.1,570.8 769.8,567.6 770.5,568.5 771.2,567.4 771.9,569.7 772.6,570.1"/></svg>
<div class="a mono t" style="left:79px;top:108px;color:#800000;font-size:14px;letter-spacing:1.6px;transform:scaleX(.7);transform-origin:0 0">Y1</div>
<div class="a mono t" style="right:1592px;top:119px;color:#800000;font-size:14px;letter-spacing:1.6px;transform:scaleX(.7);transform-origin:100% 0">-50.0</div>
<div class="a mono t" style="right:1592px;top:187px;color:#800000;font-size:14px;letter-spacing:1.6px;transform:scaleX(.7);transform-origin:100% 0">-55.0</div>
<div class="a mono t" style="right:1592px;top:255px;color:#800000;font-size:14px;letter-spacing:1.6px;transform:scaleX(.7);transform-origin:100% 0">-60.0</div>
<div class="a mono t" style="right:1592px;top:322px;color:#800000;font-size:14px;letter-spacing:1.6px;transform:scaleX(.7);transform-origin:100% 0">-65.0</div>
<div class="a mono t" style="right:1592px;top:390px;color:#800000;font-size:14px;letter-spacing:1.6px;transform:scaleX(.7);transform-origin:100% 0">-70.0</div>
<div class="a mono t" style="right:1592px;top:458px;color:#800000;font-size:14px;letter-spacing:1.6px;transform:scaleX(.7);transform-origin:100% 0">-75.0</div>
<div class="a mono t" style="right:1592px;top:526px;color:#800000;font-size:14px;letter-spacing:1.6px;transform:scaleX(.7);transform-origin:100% 0">-80.0</div>
<div class="a mono t" style="right:1592px;top:594px;color:#800000;font-size:14px;letter-spacing:1.6px;transform:scaleX(.7);transform-origin:100% 0">-85.0</div>
<div class="a mono t" style="right:1592px;top:661px;color:#800000;font-size:14px;letter-spacing:1.6px;transform:scaleX(.7);transform-origin:100% 0">-90.0</div>
<div class="a mono t" style="right:1592px;top:729px;color:#800000;font-size:14px;letter-spacing:1.6px;transform:scaleX(.7);transform-origin:100% 0">-95.0</div>
<div class="a mono t" style="right:1592px;top:797px;color:#800000;font-size:14px;letter-spacing:1.6px;transform:scaleX(.7);transform-origin:100% 0">-100.0</div>
<div class="a mono" style="left:98px;top:828px;line-height:13px;white-space:pre;font-size:14px;letter-spacing:1.6px;transform:scaleX(.7);transform-origin:0 0">2026/01/14
12:48:08.5</div>
<div class="a mono" style="left:211px;top:828px;line-height:13px;white-space:pre;font-size:14px;letter-spacing:1.6px;transform:scaleX(.7);transform-origin:0 0">2026/01/14
14:56:32.0</div>
<div class="a mono" style="left:324px;top:828px;line-height:13px;white-space:pre;font-size:14px;letter-spacing:1.6px;transform:scaleX(.7);transform-origin:0 0">2026/01/14
17:04:55.5</div>
<div class="a mono" style="left:438px;top:828px;line-height:13px;white-space:pre;font-size:14px;letter-spacing:1.6px;transform:scaleX(.7);transform-origin:0 0">2026/01/14
19:13:19.0</div>
<div class="a mono" style="left:551px;top:828px;line-height:13px;white-space:pre;font-size:14px;letter-spacing:1.6px;transform:scaleX(.7);transform-origin:0 0">2026/01/14
21:21:42.5</div>
<div class="a mono" style="left:664px;top:828px;line-height:13px;white-space:pre;font-size:14px;letter-spacing:1.6px;transform:scaleX(.7);transform-origin:0 0">2026/01/14
23:30:06.0</div>
<div class="a mono" style="left:777px;top:828px;line-height:13px;white-space:pre;font-size:14px;letter-spacing:1.6px;transform:scaleX(.7);transform-origin:0 0">2026/01/15
1:38:29.5</div>
<div class="a" style="left:0;top:1020px;width:1680px;height:30px;background:#d4d0c8;box-shadow:inset 0 1px #d4d0c8,inset 0 2px #fff"></div>
<div class="a btn" style="left:2px;top:1024px;width:62px;height:22px"></div>
<svg class="a" style="left:4px;top:1026px" width="18" height="18"><path d="M2 4 Q5 2 8 4 V9 Q5 7 2 9Z" fill="#f25022"/><path d="M9 4 Q12 6 16 4 V9 Q12 11 9 9Z" fill="#7fba00"/><path d="M2 10 Q5 8 8 10 V15 Q5 13 2 15Z" fill="#3a78e0"/><path d="M9 10 Q12 12 16 10 V15 Q12 17 9 15Z" fill="#ffb900"/></svg>
<div id="f70fe2f1e18" class="a t fit " style="left:23px;top:1027px;font-size:13px;color:#000;font-weight:bold;text-shadow:0.7px 0 #000;;--w:38px;transform:scaleX(0.7308);transform-origin:left top">スタート</div>
<svg class="a" style="left:71px;top:1027px" width="18" height="18"><path d="M14.5 9.5 H5 Q5 13.5 9 13.5 Q11.5 13.5 13 12 L14.5 14 Q12.5 16.5 9 16.5 Q2 16.5 2 10 Q2 3.5 9 3.5 Q15 3.5 14.5 9.5Z M5.2 7.5 H11.5 Q11 5.5 8.5 5.5 Q5.8 5.5 5.2 7.5Z" fill="#2a8ce0" stroke="#1050a0" stroke-width=".6"/><path d="M1 14 Q-1 17 3 16 Q10 14 16 4 Q18 0 14 2" fill="none" stroke="#5ab0f0" stroke-width="1.3"/></svg>
<svg class="a" style="left:94px;top:1027px" width="18" height="18"><path d="M3 3 H14 Q16 3 16 5 V14 Q16 16 14 16 H3 Q1 16 1 14 V5 Q1 3 3 3Z" fill="#2a70d0" stroke="#103a80" stroke-width=".7"/><path d="M4 6 H12 V13 H4Z" fill="#f0f4ff"/><path d="M6 12 L11 6 M6 12 L5.5 9.5 M6 12 L8.5 11.5" stroke="#1a4aa0" stroke-width="1.4" fill="none"/><circle cx="15" cy="6" r="1.5" fill="#e03030"/></svg>
<svg class="a" style="left:117px;top:1027px" width="18" height="18"><path d="M1 5 H6 L8 3.5 H15 V15 H1Z" fill="#f0d070" stroke="#a08020" stroke-width=".8"/><path d="M1 7 H15 V15 H1Z" fill="#f8e090"/><circle cx="8" cy="10" r="3.8" fill="#d8f0fc" stroke="#808890" stroke-width="1"/><path d="M11 13 L14 16" stroke="#8a6a30" stroke-width="2"/></svg>
<div class="a btn" style="left:142px;top:1024px;width:159px;height:22px"></div>
<div id="f5a4ce9845d" class="a t fit " style="left:166px;top:1029px;font-size:12px;color:#000;;--w:129px;transform:scaleX(0.8431);transform-origin:left top">transfile.cmd へのショート...</div>
<div class="a btn" style="left:304px;top:1024px;width:160px;height:22px"></div>
<div id="f5dfc70b8f7" class="a t fit " style="left:330px;top:1029px;font-size:12px;color:#000;;--w:111px;transform:scaleX(0.9250);transform-origin:left top">PhotoImpression 2000</div>
<div class="a" style="left:468px;top:1024px;width:159px;height:22px;background:repeating-conic-gradient(#fff 0 25%,#d4d0c8 0 50%) 0 0/2px 2px;box-shadow:inset 1px 1px #404040,inset -1px -1px #fff,inset 2px 2px #808080"></div>
<div id="f5fd30aa2bf" class="a t fit " style="left:492px;top:1029px;font-size:12px;color:#000;font-weight:bold;text-shadow:0.6px 0 #000;;--w:110px;transform:scaleX(0.9821);transform-origin:left top">ソフトサーモ　E830</div>
<svg class="a" style="left:146px;top:1028px" width="17" height="14"><rect x="0" y="0" width="17" height="14" fill="#000"/><rect x="0" y="0" width="17" height="2" fill="#4a6ab0"/><text x="1" y="11" font-size="8" fill="#fff" font-family="Liberation Mono" font-weight="bold">C:\</text></svg>
<svg class="a" style="left:308px;top:1026px" width="18" height="18"><path d="M2 4 L9 2 L16 5 L14 16 L4 16Z" fill="#e8e0d8" stroke="#555" stroke-width=".8"/><path d="M3 8 L12 14" stroke="#d03030" stroke-width="2"/><path d="M5 5 L11 12" stroke="#3060c0" stroke-width="1.6"/><rect x="10" y="3" width="6" height="5" fill="#7aa0d0" stroke="#333" stroke-width=".6"/><path d="M3 14 L8 16" stroke="#40a040" stroke-width="1.5"/></svg>
<svg class="a" style="left:472px;top:1027px" width="17" height="17"><rect x="0.5" y="0.5" width="16" height="16" fill="#e8e8e8" stroke="#303030"/><path d="M2 4 H15" stroke="#c090c0"/><path d="M2 7 H15" stroke="#90c090"/><rect x="1" y="9" width="15" height="7" fill="#303030"/><rect x="2" y="10" width="4" height="5" fill="#e02020"/><rect x="7" y="10" width="3" height="5" fill="#2030d0"/><rect x="11" y="10" width="4" height="5" fill="#20c020"/></svg>
<div class="a thins" style="left:1564px;top:1024px;width:114px;height:24px"></div>
<div id="f22333cd273" class="a t fit " style="left:1646px;top:1030px;font-size:12px;color:#000;;--w:21px;transform:scaleX(0.9130);transform-origin:left top">1:38</div>
<svg class="a" style="left:1547px;top:1028px" width="14" height="15"><path d="M8 1 Q10 3 12 1 M4 3 H12" stroke="#222" fill="none"/><rect x="1.5" y="6.5" width="12" height="7" fill="#fff" stroke="#222"/><path d="M3 8.5 H12 M3 10.5 H12 M3 12 H12" stroke="#444" stroke-dasharray="1 1"/></svg>
<svg class="a" style="left:1567px;top:1027px" width="15" height="16"><path d="M7.5 1 L14 3 V8 Q14 13 7.5 15 Q1 13 1 8 V3Z" fill="#f0e030" stroke="#6a6a90"/><path d="M7.5 4 V9" stroke="#000" stroke-width="2"/><circle cx="7.5" cy="11.5" r="1" fill="#000"/></svg>
<svg class="a" style="left:1585px;top:1027px" width="15" height="16"><path d="M7.5 1 L14 3 V8 Q14 13 7.5 15 Q1 13 1 8 V3Z" fill="#d02030" stroke="#6a6a90"/><path d="M5 6 L10 11 M10 6 L5 11" stroke="#fff" stroke-width="2"/></svg>
<svg class="a" style="left:1603px;top:1027px" width="15" height="16"><path d="M3 2 L9 2 L9 6 L5 9Z" fill="#40b030"/><rect x="5" y="8" width="10" height="7" fill="#b0b4a8" stroke="#555" transform="rotate(-20 10 11)"/></svg>
<svg class="a" style="left:1622px;top:1028px" width="14" height="14"><polygon points="7,0.5 9,5 13.5,5.2 10,8.3 11.2,13 7,10.4 2.8,13 4,8.3 0.5,5.2 5,5" fill="#f4d840" stroke="#b09020" stroke-width=".8"/></svg>
<script>(function(){var l=document.querySelectorAll(".fit");for(var i=0;i<l.length;i++){var e=l[i];var w=parseFloat(getComputedStyle(e).getPropertyValue("--w"));e.style.transform="none";var n=e.getBoundingClientRect().width;if(w>0&&n>0){e.style.transform="scaleX("+(w/n).toFixed(4)+")";}}})();</script>
</body></html>
